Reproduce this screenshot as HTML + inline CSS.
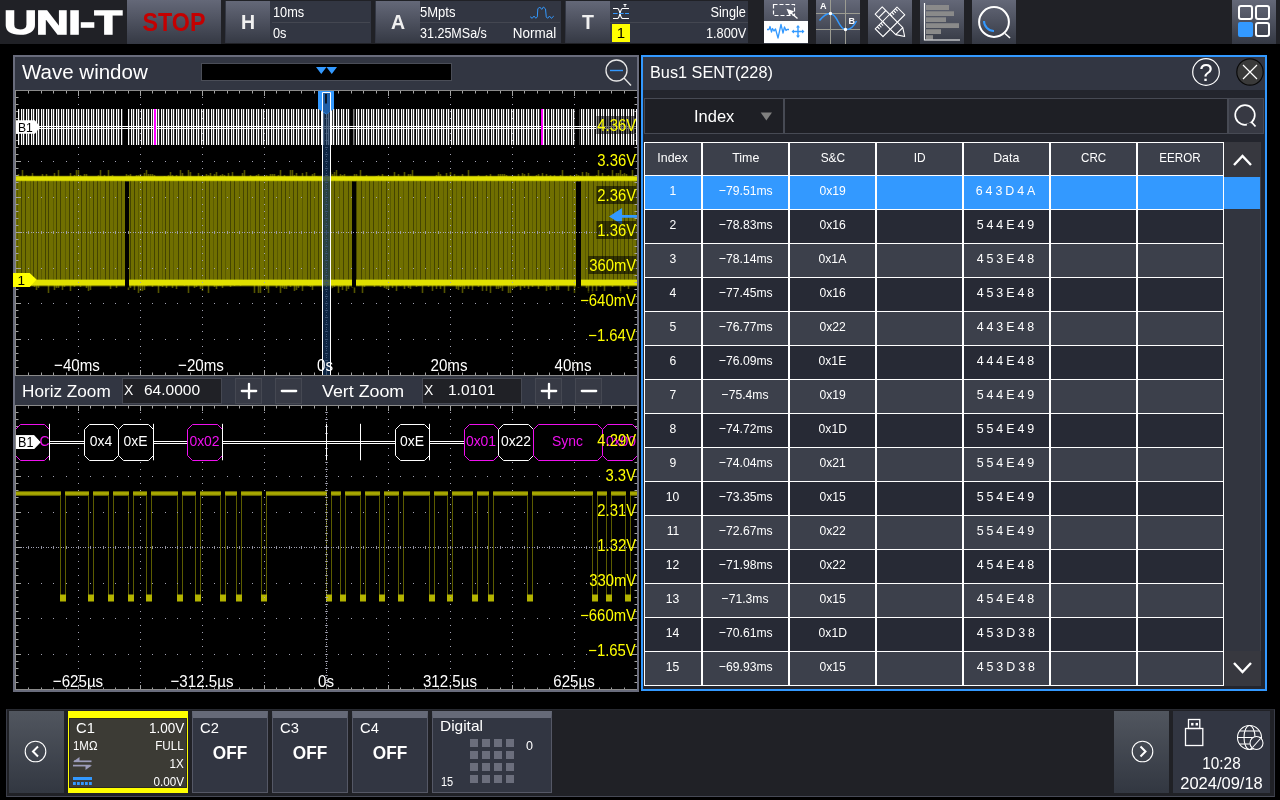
<!DOCTYPE html>
<html><head><meta charset="utf-8"><title>UNI-T</title><style>
*{box-sizing:border-box;margin:0;padding:0}
html,body{width:1280px;height:800px;background:#000;overflow:hidden}
body{position:relative;font-family:"Liberation Sans",sans-serif;color:#fff;font-size:14px;line-height:1}
.a{position:absolute}
.t{position:absolute;white-space:nowrap;line-height:1;transform-origin:0 50%}
.tr{position:absolute;white-space:nowrap;line-height:1;text-align:right;transform-origin:100% 50%}
.tc{position:absolute;white-space:nowrap;line-height:1;text-align:center;transform-origin:50% 50%}
.gb{background:linear-gradient(#646878,#353944)}
#top{left:0;top:0;width:1280px;height:44px;background:#202126}
.blk{background:#323642;top:1px;height:42px}
.hl{background:#444751;height:1px}
svg{position:absolute;overflow:visible}
.cell{position:absolute;height:33px;line-height:30.5px;text-align:center;font-size:13.5px;white-space:nowrap}
</style></head><body><div id="root" class="a" style="left:0;top:0;width:1280px;height:800px;will-change:transform">
<div id="top" class="a">
<div class="t" style="left:3.8px;top:6px;font-size:33px;font-weight:bold;letter-spacing:-.5px;transform:scaleX(1.375);color:#fff;-webkit-text-stroke:1.4px #fff">UNI-T</div>
<div class="a gb" style="left:127px;top:0;width:94px;height:44px"></div>
<div class="tc" style="left:127px;width:94px;top:9.7px;font-size:25px;font-weight:bold;color:#c40000;transform:scaleX(.93)">STOP</div>
<div class="a blk" style="left:225px;width:146px"></div>
<div class="a gb" style="left:226px;top:1px;width:44px;height:42px"></div>
<div class="tc" style="left:226px;width:44px;top:11.3px;font-size:21px;font-weight:bold;color:#f0f0f0;transform:scaleX(.93)">H</div>
<div class="a hl" style="left:272px;top:22px;width:98px"></div>
<div class="t" style="left:273px;top:5px;font-size:14px;transform:scaleX(.91)">10ms</div>
<div class="t" style="left:273px;top:26px;font-size:14px;transform:scaleX(.91)">0s</div>
<div class="a blk" style="left:375px;width:186px"></div>
<div class="a gb" style="left:376px;top:1px;width:44px;height:42px"></div>
<div class="tc" style="left:376px;width:44px;top:11.3px;font-size:21px;font-weight:bold;color:#f0f0f0;transform:scaleX(.93)">A</div>
<div class="a hl" style="left:420px;top:22px;width:140px"></div>
<div class="t" style="left:420px;top:5px;font-size:14px;transform:scaleX(.93)">5Mpts</div>
<div class="t" style="left:420px;top:26px;font-size:14px;transform:scaleX(.895)">31.25MSa/s</div>
<div class="tr" style="right:724px;top:26px;font-size:14px;transform:scaleX(.96)">Normal</div>
<svg style="left:528px;top:4px" width="28" height="18"><path d="M2.1 12.7 L4.2 14.3 L6 12.1 L7.9 14.3 L9.3 12.9 L9.8 4.9 L11.7 3 L13.750 5.4 L15.4 3 L17.5 4.9 L18.250 12.9 L19.6 14.3 L21.5 12.1 L23.4 14.3 L25.750 12.1" fill="none" stroke="#3399ff" stroke-width="1"/></svg>
<div class="a blk" style="left:565px;width:183px"></div>
<div class="a gb" style="left:566px;top:1px;width:44px;height:42px"></div>
<div class="tc" style="left:566px;width:44px;top:11.3px;font-size:21px;font-weight:bold;color:#f0f0f0;transform:scaleX(.93)">T</div>
<div class="a hl" style="left:610px;top:22px;width:138px"></div>
<div class="a" style="left:612px;top:24px;width:18px;height:18px;background:#ffff00"></div>
<div class="tc" style="left:612px;width:18px;top:24.5px;font-size:15px;color:#000">1</div>
<svg style="left:611px;top:3px" width="20" height="18"><g fill="none" stroke="#fff" stroke-width="1.1"><path d="M2 5.5 H6.5 C9 5.5 9 15.5 11.5 15.5 H18"/><path d="M2 15.5 H6.5 C9 15.5 9 5.5 11.5 5.5 H18"/><path d="M12.5 1.5 H15.5 M14 1.5 V4"/></g><path d="M2 10.5 H18" stroke="#3399ff" stroke-width="1" stroke-dasharray="4.600 1.4"/></svg>
<div class="tr" style="right:534px;top:5px;font-size:14px;transform:scaleX(.91)">Single</div>
<div class="tr" style="right:534px;top:26px;font-size:14px;transform:scaleX(.91)">1.800V</div>
<div class="a gb" style="left:764px;top:0;width:44px;height:44px"></div>
<div class="a gb" style="left:816px;top:0;width:44px;height:44px"></div>
<div class="a gb" style="left:868px;top:0;width:44px;height:44px"></div>
<div class="a gb" style="left:920px;top:0;width:44px;height:44px"></div>
<div class="a gb" style="left:972px;top:0;width:44px;height:44px"></div>
<div class="a" style="left:764px;top:21px;width:44px;height:22px;background:#fff"></div>
<svg style="left:764px;top:0" width="44" height="44"><rect x="9.5" y="4.5" width="21" height="11" fill="none" stroke="#fff" stroke-width="1.2" stroke-dasharray="4 2"/><path d="M22.5 8.8 L30 11.2 L25.3 15.600 Z" fill="#fff"/><path d="M26.500 12.500 L33.5 18.5" stroke="#fff" stroke-width="1.3"/><path d="M3 29.5 H5 L6 26.5 L7.5 32 L8.5 28.5 L10 31 L11.5 29 L14 38 L17 24.5 L19 33 L20.5 27 L22 30.5 L23 29.5 H25" fill="none" stroke="#3399ff" stroke-width="1.3" stroke-linejoin="round"/><g stroke="#3399ff" stroke-width="1.4" fill="#3399ff"><path d="M28.5 31.5 H39.5 M34 26 V37" /><path d="M27.5 31.5 L30 29.5 V33.5 Z M40.5 31.5 L38 29.5 V33.5 Z M34 25 L32 27.5 H36 Z M34 38 L32 35.5 H36 Z" stroke="none"/></g></svg>
<svg style="left:816px;top:0" width="44" height="44"><g stroke="#9c9c92" stroke-width="1"><path d="M14.5 0 V44 M29.5 0 V44 M0 13.5 H44 M0 29.5 H44"/></g><path d="M3.5 20.5 C8 15 11 13 14.5 13.5 C22 14.5 22 28.5 29.5 29.5 C34 30 37.5 27 40.5 21" fill="none" stroke="#3399ff" stroke-width="1.6"/><circle cx="14.5" cy="13.5" r="1.7" fill="#fff"/><circle cx="29.5" cy="29.5" r="1.7" fill="#fff"/><text x="4" y="9" font-family='"Liberation Sans",sans-serif' font-size="9" font-weight="bold" fill="#fff">A</text><text x="32.5" y="24" font-family='"Liberation Sans",sans-serif' font-size="9" font-weight="bold" fill="#fff">B</text></svg>
<svg style="left:868px;top:0" width="44" height="44"><g fill="none" stroke="#fff" stroke-width="1.1" stroke-linejoin="round"><g transform="translate(22 21.8) rotate(-45)"><rect x="-15.4" y="-5.5" width="30.8" height="11"/><path d="M-12.5 -5.5 v3.3 M-10 -5.5 v3.3 M-7.5 -5.5 v3.3 M-5 -5.5 v3.3 M5.5 -5.5 v3.3 M8 -5.5 v3.3 M10.500 -5.5 v3.3 M13 -5.5 v3.3"/></g><g transform="translate(22 21.8) rotate(45)"><path d="M-16 -5 H13.1 L20.700 0 L13.1 5 H-16 Z M13.1 -5 V5 M-11 -5 V5"/></g></g></svg>
<svg style="left:920px;top:0" width="44" height="44"><g fill="#8a8a8a"><rect x="6" y="5" width="23" height="5"/><rect x="6" y="11.3" width="28" height="4.7"/><rect x="6" y="17.3" width="20" height="4.7"/><rect x="6" y="23.2" width="33" height="4.8"/><rect x="6" y="29.2" width="15" height="4.8"/><rect x="6" y="35.2" width="7" height="4.3"/></g><path d="M4.5 3 V40 H40" fill="none" stroke="#fff" stroke-width="1.2"/></svg>
<svg style="left:972px;top:0" width="44" height="44"><circle cx="22" cy="22" r="14.9" fill="none" stroke="#fff" stroke-width="2"/><path d="M33 33.5 L38 38" stroke="#fff" stroke-width="1.6"/><path d="M12 21 A10 10 0 0 0 22 31" fill="none" stroke="#3399ff" stroke-width="2"/></svg>
<div class="a gb" style="left:1232px;top:0;width:44px;height:44px"></div>
<svg style="left:1232px;top:0" width="44" height="44"><g fill="none" stroke="#fff" stroke-width="2"><rect x="7" y="6" width="13" height="13" rx="2"/><rect x="24" y="6" width="13" height="13" rx="2"/><rect x="24" y="23" width="13" height="13" rx="2"/></g><rect x="6" y="22" width="15" height="15" rx="2" fill="#3399ff"/></svg>
</div>
<div class="a" style="left:13px;top:55px;width:626px;height:637px;background:#696c7c"></div>
<div class="a" style="left:15px;top:57px;width:622px;height:633px;background:#8a8a8a"></div>
<div class="a" style="left:15px;top:57px;width:622px;height:33px;background:#323642"></div>
<div class="t" style="left:22px;top:61.5px;font-size:20.5px;transform:scaleX(1.0)">Wave window</div>
<div class="a" style="left:201px;top:63px;width:251px;height:18px;background:#000;border:1px solid #4a4d57"></div>
<svg style="left:316px;top:67px" width="22" height="8"><path d="M0 0 H10.5 L5.25 7 Z M10.5 0 H21 L15.75 7 Z" fill="#3399ff"/></svg>
<svg style="left:603px;top:57px" width="32" height="32"><circle cx="13.5" cy="13.5" r="10.5" fill="none" stroke="#e6e6e6" stroke-width="1.3"/><path d="M21 21 L28 28.5" stroke="#e6e6e6" stroke-width="1.3"/><path d="M7 13.5 H20" stroke="#3399ff" stroke-width="1.4"/></svg>
<div class="a" style="left:16px;top:91px;width:621px;height:284px;background:#000;overflow:hidden">
<svg style="left:0;top:0" width="620" height="284">
<rect x="0" y="88" width="621" height="102" fill="#706f00"/>
<path d="M5.5 88v102M9.5 88v102M17.5 88v102M21.5 88v102M29.5 88v102M32.5 88v102M40.5 88v102M44.5 88v102M53.5 88v102M57.5 88v102M65.5 88v102M70.5 88v102M77.5 88v102M81.5 88v102M89.5 88v102M93.5 88v102M101.5 88v102M105.5 88v102M114.5 88v102M118.5 88v102M126.5 88v102M130.5 88v102M138.5 88v102M142.5 88v102M149.5 88v102M153.5 88v102M162.5 88v102M167.5 88v102M176.5 88v102M180.5 88v102M189.5 88v102M193.5 88v102M201.5 88v102M205.5 88v102M214.5 88v102M218.5 88v102M227.5 88v102M231.5 88v102M239.5 88v102M243.5 88v102M252.5 88v102M257.5 88v102M265.5 88v102M269.5 88v102M277.5 88v102M281.5 88v102M291.5 88v102M294.5 88v102M302.5 88v102M307.5 88v102M314.5 88v102M318.5 88v102M327.5 88v102M332.5 88v102M340.5 88v102M345.5 88v102M353.5 88v102M357.5 88v102M365.5 88v102M370.5 88v102M378.5 88v102M382.5 88v102M392.5 88v102M397.5 88v102M404.5 88v102M409.5 88v102M418.5 88v102M422.5 88v102M431.5 88v102M436.5 88v102M445.5 88v102M449.5 88v102M457.5 88v102M461.5 88v102M470.5 88v102M474.5 88v102M482.5 88v102M487.5 88v102M495.5 88v102M499.5 88v102M508.5 88v102M512.5 88v102M520.5 88v102M524.5 88v102M533.5 88v102M538.5 88v102M548.5 88v102M551.5 88v102M561.5 88v102M564.5 88v102M572.5 88v102M577.5 88v102M586.5 88v102M589.5 88v102M597.5 88v102M601.5 88v102M608.5 88v102M612.5 88v102M620.5 88v102" stroke="#444400" stroke-width="1" fill="none"/>
<path d="M1.5 88v102M14.5 88v102M25.5 88v102M37.5 88v102M49.5 88v102M61.5 88v102M73.5 88v102M84.5 88v102M97.5 88v102M109.5 88v102M122.5 88v102M134.5 88v102M146.5 88v102M157.5 88v102M171.5 88v102M185.5 88v102M197.5 88v102M209.5 88v102M223.5 88v102M234.5 88v102M248.5 88v102M261.5 88v102M273.5 88v102M286.5 88v102M298.5 88v102M311.5 88v102M323.5 88v102M336.5 88v102M349.5 88v102M362.5 88v102M374.5 88v102M387.5 88v102M400.5 88v102M414.5 88v102M427.5 88v102M440.5 88v102M454.5 88v102M466.5 88v102M478.5 88v102M491.5 88v102M503.5 88v102M516.5 88v102M529.5 88v102M543.5 88v102M556.5 88v102M569.5 88v102M581.5 88v102M593.5 88v102M604.5 88v102M616.5 88v102" stroke="#5a5a00" stroke-width="1" fill="none"/>
<path d="M2.5 86v-3M6.5 86v-7M10.5 86v-2M16.5 86v-4M16.5 194v1M18.5 194v2M20.5 194v5M22.5 194v3M26.5 86v-3M30.5 86v-3M32.5 194v8M34.5 86v-1M38.5 86v-4M38.5 194v5M40.5 194v3M42.5 86v-7M42.5 194v3M46.5 194v5M48.5 194v2M54.5 86v-4M54.5 194v6M58.5 86v-2M58.5 194v2M60.5 86v-7M62.5 86v-7M64.5 86v-2M64.5 194v2M68.5 86v-3M70.5 86v-3M70.5 194v3M72.5 194v6M74.5 194v5M82.5 86v-2M84.5 86v-7M88.5 86v-2M92.5 86v-7M94.5 86v-1M94.5 194v4M96.5 86v-2M100.5 194v3M110.5 86v-3M112.5 86v-2M112.5 194v5M114.5 86v-3M114.5 194v3M118.5 194v5M120.5 86v-2M122.5 86v-2M122.5 194v8M124.5 86v-3M124.5 194v6M126.5 194v6M128.5 86v-4M128.5 194v5M130.5 86v-7M130.5 194v1M132.5 86v-3M134.5 86v-3M136.5 86v-3M136.5 194v2M138.5 86v-2M142.5 194v8M144.5 194v1M146.5 194v2M148.5 86v-1M150.5 194v3M152.5 86v-2M154.5 86v-5M156.5 86v-2M156.5 194v3M160.5 86v-2M160.5 194v4M164.5 86v-7M166.5 86v-4M168.5 194v1M172.5 86v-7M172.5 194v8M174.5 86v-5M178.5 194v3M180.5 194v2M182.5 86v-4M184.5 194v4M186.5 86v-1M186.5 194v6M190.5 86v-3M192.5 86v-2M192.5 194v8M194.5 86v-4M198.5 86v-3M198.5 194v2M200.5 86v-5M200.5 194v4M202.5 194v1M204.5 86v-2M204.5 194v1M206.5 86v-3M206.5 194v3M208.5 86v-2M212.5 86v-4M214.5 194v2M216.5 86v-5M218.5 194v1M224.5 194v1M226.5 86v-4M228.5 86v-7M234.5 86v-2M238.5 194v8M240.5 86v-2M242.5 86v-3M242.5 194v8M244.5 194v8M246.5 194v1M250.5 86v-2M250.5 194v4M252.5 194v8M254.5 86v-3M256.5 86v-3M258.5 86v-3M260.5 194v3M262.5 86v-2M264.5 86v-7M264.5 194v8M266.5 194v3M268.5 86v-2M268.5 194v4M270.5 194v4M274.5 86v-7M274.5 194v2M276.5 86v-7M278.5 86v-2M278.5 194v6M280.5 86v-4M280.5 194v5M282.5 194v3M286.5 86v-4M286.5 194v6M290.5 86v-5M292.5 194v1M294.5 194v2M296.5 86v-3M296.5 194v5M298.5 86v-4M300.5 86v-1M306.5 194v6M310.5 194v1M314.5 86v-5M314.5 194v4M316.5 86v-3M316.5 194v3M318.5 86v-5M318.5 194v2M320.5 86v-7M322.5 194v8M324.5 86v-3M324.5 194v2M326.5 86v-2M326.5 194v5M328.5 86v-3M330.5 194v6M332.5 194v4M334.5 86v-1M336.5 194v3M338.5 86v-3M338.5 194v8M340.5 86v-3M342.5 194v1M344.5 86v-7M346.5 194v8M348.5 194v2M350.5 86v-2M358.5 194v2M360.5 86v-1M362.5 86v-2M364.5 194v2M366.5 86v-3M368.5 194v3M370.5 194v4M372.5 194v5M376.5 194v3M378.5 86v-5M380.5 86v-1M380.5 194v6M382.5 86v-3M384.5 194v1M388.5 86v-5M388.5 194v4M392.5 86v-3M392.5 194v3M394.5 86v-3M394.5 194v4M396.5 86v-7M400.5 194v2M402.5 194v1M404.5 194v1M406.5 194v8M412.5 194v2M416.5 194v6M420.5 86v-2M420.5 194v4M422.5 86v-5M424.5 86v-3M424.5 194v4M426.5 194v1M428.5 194v8M430.5 86v-4M434.5 86v-5M434.5 194v1M438.5 86v-3M440.5 194v4M442.5 86v-1M442.5 194v5M444.5 194v2M446.5 86v-3M446.5 194v8M448.5 194v4M452.5 86v-7M452.5 194v4M456.5 194v5M462.5 86v-2M462.5 194v2M466.5 194v6M470.5 86v-2M470.5 194v6M474.5 86v-3M474.5 194v8M480.5 194v4M482.5 86v-3M482.5 194v4M484.5 86v-3M484.5 194v3M486.5 86v-3M486.5 194v6M488.5 86v-3M490.5 86v-2M492.5 194v8M494.5 194v8M496.5 194v4M498.5 86v-1M498.5 194v3M500.5 194v2M502.5 86v-3M504.5 194v5M506.5 86v-4M506.5 194v1M508.5 86v-3M508.5 194v3M512.5 86v-4M512.5 194v4M514.5 86v-1M516.5 194v2M520.5 86v-2M522.5 86v-3M522.5 194v4M524.5 194v1M526.5 86v-4M526.5 194v1M530.5 86v-3M530.5 194v6M532.5 86v-1M532.5 194v2M534.5 86v-2M534.5 194v5M536.5 194v1M538.5 86v-2M540.5 194v5M542.5 194v5M544.5 86v-2M546.5 86v-7M550.5 86v-1M552.5 194v6M554.5 86v-2M558.5 194v8M560.5 86v-3M560.5 194v2M562.5 86v-2M562.5 194v3M564.5 86v-1M566.5 86v-5M570.5 86v-5M570.5 194v3M572.5 86v-4M572.5 194v8M574.5 86v-1M576.5 194v8M580.5 86v-2M580.5 194v6M582.5 86v-7M584.5 194v2M586.5 86v-4M588.5 194v6M592.5 86v-2M596.5 86v-7M596.5 194v2M600.5 86v-4M602.5 86v-4M604.5 86v-7M604.5 194v8M606.5 86v-3M608.5 86v-4M608.5 194v2M610.5 86v-3M612.5 194v4M614.5 86v-1M616.5 86v-7" stroke="#8c8c00" stroke-width="1.6" fill="none" opacity=".6"/>
<rect x="0" y="85.3" width="621" height="4.4" fill="#f4f400"/>
<rect x="0" y="84.6" width="621" height="5.8" fill="#c8c800" opacity=".4"/>
<rect x="0" y="189" width="621" height="5.5" fill="#f4f400"/>
<rect x="0" y="188" width="621" height="7.5" fill="#c8c800" opacity=".45"/>
<rect x="109" y="90.5" width="4" height="106" fill="#000"/>
<rect x="336" y="90.5" width="4" height="106" fill="#000"/>
<rect x="560" y="90.5" width="5" height="106" fill="#000"/>
<path d="M62 6.5h1M62 13.5h1M62 20.5h1M62 27.5h1M62 35.5h1M62 42.5h1M62 49.5h1M62 56.5h1M62 63.5h1M62 70.5h1M62 77.5h1M62 84.5h1M62 91.5h1M62 98.5h1M62 106.5h1M62 113.5h1M62 120.5h1M62 127.5h1M62 134.5h1M62 141.5h1M62 148.5h1M62 155.5h1M62 162.5h1M62 169.5h1M62 177.5h1M62 184.5h1M62 191.5h1M62 198.5h1M62 205.5h1M62 212.5h1M62 219.5h1M62 226.5h1M62 233.5h1M62 240.5h1M62 248.5h1M62 255.5h1M62 262.5h1M62 269.5h1M62 276.5h1M124 6.5h1M124 13.5h1M124 20.5h1M124 27.5h1M124 35.5h1M124 42.5h1M124 49.5h1M124 56.5h1M124 63.5h1M124 70.5h1M124 77.5h1M124 84.5h1M124 91.5h1M124 98.5h1M124 106.5h1M124 113.5h1M124 120.5h1M124 127.5h1M124 134.5h1M124 141.5h1M124 148.5h1M124 155.5h1M124 162.5h1M124 169.5h1M124 177.5h1M124 184.5h1M124 191.5h1M124 198.5h1M124 205.5h1M124 212.5h1M124 219.5h1M124 226.5h1M124 233.5h1M124 240.5h1M124 248.5h1M124 255.5h1M124 262.5h1M124 269.5h1M124 276.5h1M186 6.5h1M186 13.5h1M186 20.5h1M186 27.5h1M186 35.5h1M186 42.5h1M186 49.5h1M186 56.5h1M186 63.5h1M186 70.5h1M186 77.5h1M186 84.5h1M186 91.5h1M186 98.5h1M186 106.5h1M186 113.5h1M186 120.5h1M186 127.5h1M186 134.5h1M186 141.5h1M186 148.5h1M186 155.5h1M186 162.5h1M186 169.5h1M186 177.5h1M186 184.5h1M186 191.5h1M186 198.5h1M186 205.5h1M186 212.5h1M186 219.5h1M186 226.5h1M186 233.5h1M186 240.5h1M186 248.5h1M186 255.5h1M186 262.5h1M186 269.5h1M186 276.5h1M248 6.5h1M248 13.5h1M248 20.5h1M248 27.5h1M248 35.5h1M248 42.5h1M248 49.5h1M248 56.5h1M248 63.5h1M248 70.5h1M248 77.5h1M248 84.5h1M248 91.5h1M248 98.5h1M248 106.5h1M248 113.5h1M248 120.5h1M248 127.5h1M248 134.5h1M248 141.5h1M248 148.5h1M248 155.5h1M248 162.5h1M248 169.5h1M248 177.5h1M248 184.5h1M248 191.5h1M248 198.5h1M248 205.5h1M248 212.5h1M248 219.5h1M248 226.5h1M248 233.5h1M248 240.5h1M248 248.5h1M248 255.5h1M248 262.5h1M248 269.5h1M248 276.5h1M372 6.5h1M372 13.5h1M372 20.5h1M372 27.5h1M372 35.5h1M372 42.5h1M372 49.5h1M372 56.5h1M372 63.5h1M372 70.5h1M372 77.5h1M372 84.5h1M372 91.5h1M372 98.5h1M372 106.5h1M372 113.5h1M372 120.5h1M372 127.5h1M372 134.5h1M372 141.5h1M372 148.5h1M372 155.5h1M372 162.5h1M372 169.5h1M372 177.5h1M372 184.5h1M372 191.5h1M372 198.5h1M372 205.5h1M372 212.5h1M372 219.5h1M372 226.5h1M372 233.5h1M372 240.5h1M372 248.5h1M372 255.5h1M372 262.5h1M372 269.5h1M372 276.5h1M434 6.5h1M434 13.5h1M434 20.5h1M434 27.5h1M434 35.5h1M434 42.5h1M434 49.5h1M434 56.5h1M434 63.5h1M434 70.5h1M434 77.5h1M434 84.5h1M434 91.5h1M434 98.5h1M434 106.5h1M434 113.5h1M434 120.5h1M434 127.5h1M434 134.5h1M434 141.5h1M434 148.5h1M434 155.5h1M434 162.5h1M434 169.5h1M434 177.5h1M434 184.5h1M434 191.5h1M434 198.5h1M434 205.5h1M434 212.5h1M434 219.5h1M434 226.5h1M434 233.5h1M434 240.5h1M434 248.5h1M434 255.5h1M434 262.5h1M434 269.5h1M434 276.5h1M496 6.5h1M496 13.5h1M496 20.5h1M496 27.5h1M496 35.5h1M496 42.5h1M496 49.5h1M496 56.5h1M496 63.5h1M496 70.5h1M496 77.5h1M496 84.5h1M496 91.5h1M496 98.5h1M496 106.5h1M496 113.5h1M496 120.5h1M496 127.5h1M496 134.5h1M496 141.5h1M496 148.5h1M496 155.5h1M496 162.5h1M496 169.5h1M496 177.5h1M496 184.5h1M496 191.5h1M496 198.5h1M496 205.5h1M496 212.5h1M496 219.5h1M496 226.5h1M496 233.5h1M496 240.5h1M496 248.5h1M496 255.5h1M496 262.5h1M496 269.5h1M496 276.5h1M558 6.5h1M558 13.5h1M558 20.5h1M558 27.5h1M558 35.5h1M558 42.5h1M558 49.5h1M558 56.5h1M558 63.5h1M558 70.5h1M558 77.5h1M558 84.5h1M558 91.5h1M558 98.5h1M558 106.5h1M558 113.5h1M558 120.5h1M558 127.5h1M558 134.5h1M558 141.5h1M558 148.5h1M558 155.5h1M558 162.5h1M558 169.5h1M558 177.5h1M558 184.5h1M558 191.5h1M558 198.5h1M558 205.5h1M558 212.5h1M558 219.5h1M558 226.5h1M558 233.5h1M558 240.5h1M558 248.5h1M558 255.5h1M558 262.5h1M558 269.5h1M558 276.5h1M12 35.5h1M25 35.5h1M37 35.5h1M50 35.5h1M62 35.5h1M74 35.5h1M87 35.5h1M99 35.5h1M112 35.5h1M124 35.5h1M136 35.5h1M149 35.5h1M161 35.5h1M174 35.5h1M186 35.5h1M198 35.5h1M211 35.5h1M223 35.5h1M236 35.5h1M248 35.5h1M260 35.5h1M273 35.5h1M285 35.5h1M298 35.5h1M310 35.5h1M322 35.5h1M335 35.5h1M347 35.5h1M360 35.5h1M372 35.5h1M384 35.5h1M397 35.5h1M409 35.5h1M422 35.5h1M434 35.5h1M446 35.5h1M459 35.5h1M471 35.5h1M484 35.5h1M496 35.5h1M508 35.5h1M521 35.5h1M533 35.5h1M546 35.5h1M558 35.5h1M570 35.5h1M583 35.5h1M595 35.5h1M608 35.5h1M12 70.5h1M25 70.5h1M37 70.5h1M50 70.5h1M62 70.5h1M74 70.5h1M87 70.5h1M99 70.5h1M112 70.5h1M124 70.5h1M136 70.5h1M149 70.5h1M161 70.5h1M174 70.5h1M186 70.5h1M198 70.5h1M211 70.5h1M223 70.5h1M236 70.5h1M248 70.5h1M260 70.5h1M273 70.5h1M285 70.5h1M298 70.5h1M310 70.5h1M322 70.5h1M335 70.5h1M347 70.5h1M360 70.5h1M372 70.5h1M384 70.5h1M397 70.5h1M409 70.5h1M422 70.5h1M434 70.5h1M446 70.5h1M459 70.5h1M471 70.5h1M484 70.5h1M496 70.5h1M508 70.5h1M521 70.5h1M533 70.5h1M546 70.5h1M558 70.5h1M570 70.5h1M583 70.5h1M595 70.5h1M608 70.5h1M12 106.5h1M25 106.5h1M37 106.5h1M50 106.5h1M62 106.5h1M74 106.5h1M87 106.5h1M99 106.5h1M112 106.5h1M124 106.5h1M136 106.5h1M149 106.5h1M161 106.5h1M174 106.5h1M186 106.5h1M198 106.5h1M211 106.5h1M223 106.5h1M236 106.5h1M248 106.5h1M260 106.5h1M273 106.5h1M285 106.5h1M298 106.5h1M310 106.5h1M322 106.5h1M335 106.5h1M347 106.5h1M360 106.5h1M372 106.5h1M384 106.5h1M397 106.5h1M409 106.5h1M422 106.5h1M434 106.5h1M446 106.5h1M459 106.5h1M471 106.5h1M484 106.5h1M496 106.5h1M508 106.5h1M521 106.5h1M533 106.5h1M546 106.5h1M558 106.5h1M570 106.5h1M583 106.5h1M595 106.5h1M608 106.5h1M12 177.5h1M25 177.5h1M37 177.5h1M50 177.5h1M62 177.5h1M74 177.5h1M87 177.5h1M99 177.5h1M112 177.5h1M124 177.5h1M136 177.5h1M149 177.5h1M161 177.5h1M174 177.5h1M186 177.5h1M198 177.5h1M211 177.5h1M223 177.5h1M236 177.5h1M248 177.5h1M260 177.5h1M273 177.5h1M285 177.5h1M298 177.5h1M310 177.5h1M322 177.5h1M335 177.5h1M347 177.5h1M360 177.5h1M372 177.5h1M384 177.5h1M397 177.5h1M409 177.5h1M422 177.5h1M434 177.5h1M446 177.5h1M459 177.5h1M471 177.5h1M484 177.5h1M496 177.5h1M508 177.5h1M521 177.5h1M533 177.5h1M546 177.5h1M558 177.5h1M570 177.5h1M583 177.5h1M595 177.5h1M608 177.5h1M12 212.5h1M25 212.5h1M37 212.5h1M50 212.5h1M62 212.5h1M74 212.5h1M87 212.5h1M99 212.5h1M112 212.5h1M124 212.5h1M136 212.5h1M149 212.5h1M161 212.5h1M174 212.5h1M186 212.5h1M198 212.5h1M211 212.5h1M223 212.5h1M236 212.5h1M248 212.5h1M260 212.5h1M273 212.5h1M285 212.5h1M298 212.5h1M310 212.5h1M322 212.5h1M335 212.5h1M347 212.5h1M360 212.5h1M372 212.5h1M384 212.5h1M397 212.5h1M409 212.5h1M422 212.5h1M434 212.5h1M446 212.5h1M459 212.5h1M471 212.5h1M484 212.5h1M496 212.5h1M508 212.5h1M521 212.5h1M533 212.5h1M546 212.5h1M558 212.5h1M570 212.5h1M583 212.5h1M595 212.5h1M608 212.5h1M12 248.5h1M25 248.5h1M37 248.5h1M50 248.5h1M62 248.5h1M74 248.5h1M87 248.5h1M99 248.5h1M112 248.5h1M124 248.5h1M136 248.5h1M149 248.5h1M161 248.5h1M174 248.5h1M186 248.5h1M198 248.5h1M211 248.5h1M223 248.5h1M236 248.5h1M248 248.5h1M260 248.5h1M273 248.5h1M285 248.5h1M298 248.5h1M310 248.5h1M322 248.5h1M335 248.5h1M347 248.5h1M360 248.5h1M372 248.5h1M384 248.5h1M397 248.5h1M409 248.5h1M422 248.5h1M434 248.5h1M446 248.5h1M459 248.5h1M471 248.5h1M484 248.5h1M496 248.5h1M508 248.5h1M521 248.5h1M533 248.5h1M546 248.5h1M558 248.5h1M570 248.5h1M583 248.5h1M595 248.5h1M608 248.5h1" stroke="#a2a2b2" stroke-width="1" fill="none"/><path d="M310 1.5h1M310 4.5h1M310 6.5h1M310 8.5h1M310 11.5h1M310 13.5h1M310 16.5h1M310 18.5h1M310 20.5h1M310 23.5h1M310 25.5h1M310 27.5h1M310 30.5h1M310 32.5h1M310 35.5h1M310 37.5h1M310 39.5h1M310 42.5h1M310 44.5h1M310 46.5h1M310 49.5h1M310 51.5h1M310 53.5h1M310 56.5h1M310 58.5h1M310 61.5h1M310 63.5h1M310 65.5h1M310 68.5h1M310 70.5h1M310 72.5h1M310 75.5h1M310 77.5h1M310 79.5h1M310 82.5h1M310 84.5h1M310 87.5h1M310 89.5h1M310 91.5h1M310 94.5h1M310 96.5h1M310 98.5h1M310 101.5h1M310 103.5h1M310 106.5h1M310 108.5h1M310 110.5h1M310 113.5h1M310 115.5h1M310 117.5h1M310 120.5h1M310 122.5h1M310 124.5h1M310 127.5h1M310 129.5h1M310 132.5h1M310 134.5h1M310 136.5h1M310 139.5h1M310 141.5h1M310 143.5h1M310 146.5h1M310 148.5h1M310 150.5h1M310 153.5h1M310 155.5h1M310 158.5h1M310 160.5h1M310 162.5h1M310 165.5h1M310 167.5h1M310 169.5h1M310 172.5h1M310 174.5h1M310 177.5h1M310 179.5h1M310 181.5h1M310 184.5h1M310 186.5h1M310 188.5h1M310 191.5h1M310 193.5h1M310 195.5h1M310 198.5h1M310 200.5h1M310 203.5h1M310 205.5h1M310 207.5h1M310 210.5h1M310 212.5h1M310 214.5h1M310 217.5h1M310 219.5h1M310 221.5h1M310 224.5h1M310 226.5h1M310 229.5h1M310 231.5h1M310 233.5h1M310 236.5h1M310 238.5h1M310 240.5h1M310 243.5h1M310 245.5h1M310 248.5h1M310 250.5h1M310 252.5h1M310 255.5h1M310 257.5h1M310 259.5h1M310 262.5h1M310 264.5h1M310 266.5h1M310 269.5h1M310 271.5h1M310 274.5h1M310 276.5h1M310 278.5h1M310 281.5h1M2 141.5h1M5 141.5h1M7 141.5h1M10 141.5h1M12 141.5h1M15 141.5h1M17 141.5h1M20 141.5h1M22 141.5h1M25 141.5h1M27 141.5h1M30 141.5h1M32 141.5h1M35 141.5h1M37 141.5h1M40 141.5h1M42 141.5h1M45 141.5h1M47 141.5h1M50 141.5h1M52 141.5h1M55 141.5h1M57 141.5h1M60 141.5h1M62 141.5h1M64 141.5h1M67 141.5h1M69 141.5h1M72 141.5h1M74 141.5h1M77 141.5h1M79 141.5h1M82 141.5h1M84 141.5h1M87 141.5h1M89 141.5h1M92 141.5h1M94 141.5h1M97 141.5h1M99 141.5h1M102 141.5h1M104 141.5h1M107 141.5h1M109 141.5h1M112 141.5h1M114 141.5h1M117 141.5h1M119 141.5h1M122 141.5h1M124 141.5h1M126 141.5h1M129 141.5h1M131 141.5h1M134 141.5h1M136 141.5h1M139 141.5h1M141 141.5h1M144 141.5h1M146 141.5h1M149 141.5h1M151 141.5h1M154 141.5h1M156 141.5h1M159 141.5h1M161 141.5h1M164 141.5h1M166 141.5h1M169 141.5h1M171 141.5h1M174 141.5h1M176 141.5h1M179 141.5h1M181 141.5h1M184 141.5h1M186 141.5h1M188 141.5h1M191 141.5h1M193 141.5h1M196 141.5h1M198 141.5h1M201 141.5h1M203 141.5h1M206 141.5h1M208 141.5h1M211 141.5h1M213 141.5h1M216 141.5h1M218 141.5h1M221 141.5h1M223 141.5h1M226 141.5h1M228 141.5h1M231 141.5h1M233 141.5h1M236 141.5h1M238 141.5h1M241 141.5h1M243 141.5h1M246 141.5h1M248 141.5h1M250 141.5h1M253 141.5h1M255 141.5h1M258 141.5h1M260 141.5h1M263 141.5h1M265 141.5h1M268 141.5h1M270 141.5h1M273 141.5h1M275 141.5h1M278 141.5h1M280 141.5h1M283 141.5h1M285 141.5h1M288 141.5h1M290 141.5h1M293 141.5h1M295 141.5h1M298 141.5h1M300 141.5h1M303 141.5h1M305 141.5h1M308 141.5h1M310 141.5h1M312 141.5h1M315 141.5h1M317 141.5h1M320 141.5h1M322 141.5h1M325 141.5h1M327 141.5h1M330 141.5h1M332 141.5h1M335 141.5h1M337 141.5h1M340 141.5h1M342 141.5h1M345 141.5h1M347 141.5h1M350 141.5h1M352 141.5h1M355 141.5h1M357 141.5h1M360 141.5h1M362 141.5h1M365 141.5h1M367 141.5h1M370 141.5h1M372 141.5h1M374 141.5h1M377 141.5h1M379 141.5h1M382 141.5h1M384 141.5h1M387 141.5h1M389 141.5h1M392 141.5h1M394 141.5h1M397 141.5h1M399 141.5h1M402 141.5h1M404 141.5h1M407 141.5h1M409 141.5h1M412 141.5h1M414 141.5h1M417 141.5h1M419 141.5h1M422 141.5h1M424 141.5h1M427 141.5h1M429 141.5h1M432 141.5h1M434 141.5h1M436 141.5h1M439 141.5h1M441 141.5h1M444 141.5h1M446 141.5h1M449 141.5h1M451 141.5h1M454 141.5h1M456 141.5h1M459 141.5h1M461 141.5h1M464 141.5h1M466 141.5h1M469 141.5h1M471 141.5h1M474 141.5h1M476 141.5h1M479 141.5h1M481 141.5h1M484 141.5h1M486 141.5h1M489 141.5h1M491 141.5h1M494 141.5h1M496 141.5h1M498 141.5h1M501 141.5h1M503 141.5h1M506 141.5h1M508 141.5h1M511 141.5h1M513 141.5h1M516 141.5h1M518 141.5h1M521 141.5h1M523 141.5h1M526 141.5h1M528 141.5h1M531 141.5h1M533 141.5h1M536 141.5h1M538 141.5h1M541 141.5h1M543 141.5h1M546 141.5h1M548 141.5h1M551 141.5h1M553 141.5h1M556 141.5h1M558 141.5h1M560 141.5h1M563 141.5h1M565 141.5h1M568 141.5h1M570 141.5h1M573 141.5h1M575 141.5h1M578 141.5h1M580 141.5h1M583 141.5h1M585 141.5h1M588 141.5h1M590 141.5h1M593 141.5h1M595 141.5h1M598 141.5h1M600 141.5h1M603 141.5h1M605 141.5h1M608 141.5h1M610 141.5h1M613 141.5h1M615 141.5h1M618 141.5h1" stroke="#a2a2b2" stroke-width="1" fill="none"/><path d="M12.5 140.0v3M25.5 140.0v3M37.5 140.0v3M50.5 140.0v3M62.5 140.0v3M74.5 140.0v3M87.5 140.0v3M99.5 140.0v3M112.5 140.0v3M124.5 140.0v3M136.5 140.0v3M149.5 140.0v3M161.5 140.0v3M174.5 140.0v3M186.5 140.0v3M198.5 140.0v3M211.5 140.0v3M223.5 140.0v3M236.5 140.0v3M248.5 140.0v3M260.5 140.0v3M273.5 140.0v3M285.5 140.0v3M298.5 140.0v3M310.5 140.0v3M322.5 140.0v3M335.5 140.0v3M347.5 140.0v3M360.5 140.0v3M372.5 140.0v3M384.5 140.0v3M397.5 140.0v3M409.5 140.0v3M422.5 140.0v3M434.5 140.0v3M446.5 140.0v3M459.5 140.0v3M471.5 140.0v3M484.5 140.0v3M496.5 140.0v3M508.5 140.0v3M521.5 140.0v3M533.5 140.0v3M546.5 140.0v3M558.5 140.0v3M570.5 140.0v3M583.5 140.0v3M595.5 140.0v3M608.5 140.0v3M309 6.5h3M309 13.5h3M309 20.5h3M309 27.5h3M309 35.5h3M309 42.5h3M309 49.5h3M309 56.5h3M309 63.5h3M309 70.5h3M309 77.5h3M309 84.5h3M309 91.5h3M309 98.5h3M309 106.5h3M309 113.5h3M309 120.5h3M309 127.5h3M309 134.5h3M309 141.5h3M309 148.5h3M309 155.5h3M309 162.5h3M309 169.5h3M309 177.5h3M309 184.5h3M309 191.5h3M309 198.5h3M309 205.5h3M309 212.5h3M309 219.5h3M309 226.5h3M309 233.5h3M309 240.5h3M309 248.5h3M309 255.5h3M309 262.5h3M309 269.5h3M309 276.5h3" stroke="#a2a2b2" stroke-width="1" fill="none" opacity=".85"/><path d="M12.5 0v2.5M12.5 284v-2.5M25.5 0v2.5M25.5 284v-2.5M37.5 0v2.5M37.5 284v-2.5M50.5 0v2.5M50.5 284v-2.5M62.5 0v5M62.5 284v-5M74.5 0v2.5M74.5 284v-2.5M87.5 0v2.5M87.5 284v-2.5M99.5 0v2.5M99.5 284v-2.5M112.5 0v2.5M112.5 284v-2.5M124.5 0v5M124.5 284v-5M136.5 0v2.5M136.5 284v-2.5M149.5 0v2.5M149.5 284v-2.5M161.5 0v2.5M161.5 284v-2.5M174.5 0v2.5M174.5 284v-2.5M186.5 0v5M186.5 284v-5M198.5 0v2.5M198.5 284v-2.5M211.5 0v2.5M211.5 284v-2.5M223.5 0v2.5M223.5 284v-2.5M236.5 0v2.5M236.5 284v-2.5M248.5 0v5M248.5 284v-5M260.5 0v2.5M260.5 284v-2.5M273.5 0v2.5M273.5 284v-2.5M285.5 0v2.5M285.5 284v-2.5M298.5 0v2.5M298.5 284v-2.5M310.5 0v5M310.5 284v-5M322.5 0v2.5M322.5 284v-2.5M335.5 0v2.5M335.5 284v-2.5M347.5 0v2.5M347.5 284v-2.5M360.5 0v2.5M360.5 284v-2.5M372.5 0v5M372.5 284v-5M384.5 0v2.5M384.5 284v-2.5M397.5 0v2.5M397.5 284v-2.5M409.5 0v2.5M409.5 284v-2.5M422.5 0v2.5M422.5 284v-2.5M434.5 0v5M434.5 284v-5M446.5 0v2.5M446.5 284v-2.5M459.5 0v2.5M459.5 284v-2.5M471.5 0v2.5M471.5 284v-2.5M484.5 0v2.5M484.5 284v-2.5M496.5 0v5M496.5 284v-5M508.5 0v2.5M508.5 284v-2.5M521.5 0v2.5M521.5 284v-2.5M533.5 0v2.5M533.5 284v-2.5M546.5 0v2.5M546.5 284v-2.5M558.5 0v5M558.5 284v-5M570.5 0v2.5M570.5 284v-2.5M583.5 0v2.5M583.5 284v-2.5M595.5 0v2.5M595.5 284v-2.5M608.5 0v2.5M608.5 284v-2.5M0 6.5h2.5M621 6.5h-2.5M0 13.5h2.5M621 13.5h-2.5M0 20.5h2.5M621 20.5h-2.5M0 27.5h2.5M621 27.5h-2.5M0 35.5h5M621 35.5h-5M0 42.5h2.5M621 42.5h-2.5M0 49.5h2.5M621 49.5h-2.5M0 56.5h2.5M621 56.5h-2.5M0 63.5h2.5M621 63.5h-2.5M0 70.5h5M621 70.5h-5M0 77.5h2.5M621 77.5h-2.5M0 84.5h2.5M621 84.5h-2.5M0 91.5h2.5M621 91.5h-2.5M0 98.5h2.5M621 98.5h-2.5M0 106.5h5M621 106.5h-5M0 113.5h2.5M621 113.5h-2.5M0 120.5h2.5M621 120.5h-2.5M0 127.5h2.5M621 127.5h-2.5M0 134.5h2.5M621 134.5h-2.5M0 141.5h5M621 141.5h-5M0 148.5h2.5M621 148.5h-2.5M0 155.5h2.5M621 155.5h-2.5M0 162.5h2.5M621 162.5h-2.5M0 169.5h2.5M621 169.5h-2.5M0 177.5h5M621 177.5h-5M0 184.5h2.5M621 184.5h-2.5M0 191.5h2.5M621 191.5h-2.5M0 198.5h2.5M621 198.5h-2.5M0 205.5h2.5M621 205.5h-2.5M0 212.5h5M621 212.5h-5M0 219.5h2.5M621 219.5h-2.5M0 226.5h2.5M621 226.5h-2.5M0 233.5h2.5M621 233.5h-2.5M0 240.5h2.5M621 240.5h-2.5M0 248.5h5M621 248.5h-5M0 255.5h2.5M621 255.5h-2.5M0 262.5h2.5M621 262.5h-2.5M0 269.5h2.5M621 269.5h-2.5M0 276.5h2.5M621 276.5h-2.5" stroke="#a4a4a4" stroke-width="1" fill="none"/>
<path d="M2 18h1.25v36h-1.25zM5 18h1.25v36h-1.25zM7 18h1.25v36h-1.25zM10 18h1.25v36h-1.25zM12 18h1.25v36h-1.25zM15 18h1.25v36h-1.25zM17 18h1.25v36h-1.25zM20 18h1.25v36h-1.25zM22 18h1.25v36h-1.25zM25 18h1.25v36h-1.25zM27 18h1.25v36h-1.25zM30 18h1.25v36h-1.25zM32 18h1.25v36h-1.25zM35 18h1.25v36h-1.25zM37 18h1.25v36h-1.25zM40 18h1.25v36h-1.25zM42 18h1.25v36h-1.25zM45 18h1.25v36h-1.25zM47 18h1.25v36h-1.25zM50 18h1.25v36h-1.25zM52 18h1.25v36h-1.25zM55 18h1.25v36h-1.25zM57 18h1.25v36h-1.25zM60 18h1.25v36h-1.25zM62 18h1.25v36h-1.25zM65 18h1.25v36h-1.25zM67 18h1.25v36h-1.25zM70 18h1.25v36h-1.25zM72 18h1.25v36h-1.25zM75 18h1.25v36h-1.25zM77 18h1.25v36h-1.25zM80 18h1.25v36h-1.25zM82 18h1.25v36h-1.25zM85 18h1.25v36h-1.25zM87 18h1.25v36h-1.25zM90 18h1.25v36h-1.25zM92 18h1.25v36h-1.25zM95 18h1.25v36h-1.25zM97 18h1.25v36h-1.25zM100 18h1.25v36h-1.25zM102 18h1.25v36h-1.25zM105 18h1.25v36h-1.25zM107 18h1.25v36h-1.25zM110 18h1.25v36h-1.25zM112 18h1.25v36h-1.25zM115 18h1.25v36h-1.25zM117 18h1.25v36h-1.25zM120 18h1.25v36h-1.25zM122 18h1.25v36h-1.25zM125 18h1.25v36h-1.25zM127 18h1.25v36h-1.25zM130 18h1.25v36h-1.25zM132 18h1.25v36h-1.25zM135 18h1.25v36h-1.25zM137 18h1.25v36h-1.25zM140 18h1.25v36h-1.25zM142 18h1.25v36h-1.25zM145 18h1.25v36h-1.25zM147 18h1.25v36h-1.25zM150 18h1.25v36h-1.25zM152 18h1.25v36h-1.25zM155 18h1.25v36h-1.25zM157 18h1.25v36h-1.25zM160 18h1.25v36h-1.25zM162 18h1.25v36h-1.25zM165 18h1.25v36h-1.25zM167 18h1.25v36h-1.25zM170 18h1.25v36h-1.25zM172 18h1.25v36h-1.25zM175 18h1.25v36h-1.25zM177 18h1.25v36h-1.25zM180 18h1.25v36h-1.25zM182 18h1.25v36h-1.25zM185 18h1.25v36h-1.25zM187 18h1.25v36h-1.25zM190 18h1.25v36h-1.25zM192 18h1.25v36h-1.25zM195 18h1.25v36h-1.25zM197 18h1.25v36h-1.25zM200 18h1.25v36h-1.25zM202 18h1.25v36h-1.25zM205 18h1.25v36h-1.25zM207 18h1.25v36h-1.25zM210 18h1.25v36h-1.25zM212 18h1.25v36h-1.25zM215 18h1.25v36h-1.25zM217 18h1.25v36h-1.25zM220 18h1.25v36h-1.25zM222 18h1.25v36h-1.25zM225 18h1.25v36h-1.25zM227 18h1.25v36h-1.25zM230 18h1.25v36h-1.25zM232 18h1.25v36h-1.25zM235 18h1.25v36h-1.25zM237 18h1.25v36h-1.25zM240 18h1.25v36h-1.25zM242 18h1.25v36h-1.25zM245 18h1.25v36h-1.25zM247 18h1.25v36h-1.25zM250 18h1.25v36h-1.25zM252 18h1.25v36h-1.25zM255 18h1.25v36h-1.25zM257 18h1.25v36h-1.25zM260 18h1.25v36h-1.25zM262 18h1.25v36h-1.25zM265 18h1.25v36h-1.25zM267 18h1.25v36h-1.25zM270 18h1.25v36h-1.25zM272 18h1.25v36h-1.25zM275 18h1.25v36h-1.25zM277 18h1.25v36h-1.25zM280 18h1.25v36h-1.25zM282 18h1.25v36h-1.25zM285 18h1.25v36h-1.25zM287 18h1.25v36h-1.25zM290 18h1.25v36h-1.25zM292 18h1.25v36h-1.25zM295 18h1.25v36h-1.25zM297 18h1.25v36h-1.25zM300 18h1.25v36h-1.25zM302 18h1.25v36h-1.25zM305 18h1.25v36h-1.25zM307 18h1.25v36h-1.25zM310 18h1.25v36h-1.25zM312 18h1.25v36h-1.25zM315 18h1.25v36h-1.25zM317 18h1.25v36h-1.25zM320 18h1.25v36h-1.25zM322 18h1.25v36h-1.25zM325 18h1.25v36h-1.25zM327 18h1.25v36h-1.25zM330 18h1.25v36h-1.25zM332 18h1.25v36h-1.25zM335 18h1.25v36h-1.25zM337 18h1.25v36h-1.25zM340 18h1.25v36h-1.25zM342 18h1.25v36h-1.25zM345 18h1.25v36h-1.25zM347 18h1.25v36h-1.25zM350 18h1.25v36h-1.25zM352 18h1.25v36h-1.25zM355 18h1.25v36h-1.25zM357 18h1.25v36h-1.25zM360 18h1.25v36h-1.25zM362 18h1.25v36h-1.25zM365 18h1.25v36h-1.25zM367 18h1.25v36h-1.25zM370 18h1.25v36h-1.25zM372 18h1.25v36h-1.25zM375 18h1.25v36h-1.25zM377 18h1.25v36h-1.25zM380 18h1.25v36h-1.25zM382 18h1.25v36h-1.25zM385 18h1.25v36h-1.25zM387 18h1.25v36h-1.25zM390 18h1.25v36h-1.25zM392 18h1.25v36h-1.25zM395 18h1.25v36h-1.25zM397 18h1.25v36h-1.25zM400 18h1.25v36h-1.25zM402 18h1.25v36h-1.25zM405 18h1.25v36h-1.25zM407 18h1.25v36h-1.25zM410 18h1.25v36h-1.25zM412 18h1.25v36h-1.25zM415 18h1.25v36h-1.25zM417 18h1.25v36h-1.25zM420 18h1.25v36h-1.25zM422 18h1.25v36h-1.25zM425 18h1.25v36h-1.25zM427 18h1.25v36h-1.25zM430 18h1.25v36h-1.25zM432 18h1.25v36h-1.25zM435 18h1.25v36h-1.25zM437 18h1.25v36h-1.25zM440 18h1.25v36h-1.25zM442 18h1.25v36h-1.25zM445 18h1.25v36h-1.25zM447 18h1.25v36h-1.25zM450 18h1.25v36h-1.25zM452 18h1.25v36h-1.25zM455 18h1.25v36h-1.25zM457 18h1.25v36h-1.25zM460 18h1.25v36h-1.25zM462 18h1.25v36h-1.25zM465 18h1.25v36h-1.25zM467 18h1.25v36h-1.25zM470 18h1.25v36h-1.25zM472 18h1.25v36h-1.25zM475 18h1.25v36h-1.25zM477 18h1.25v36h-1.25zM480 18h1.25v36h-1.25zM482 18h1.25v36h-1.25zM485 18h1.25v36h-1.25zM487 18h1.25v36h-1.25zM490 18h1.25v36h-1.25zM492 18h1.25v36h-1.25zM495 18h1.25v36h-1.25zM497 18h1.25v36h-1.25zM500 18h1.25v36h-1.25zM502 18h1.25v36h-1.25zM505 18h1.25v36h-1.25zM507 18h1.25v36h-1.25zM510 18h1.25v36h-1.25zM512 18h1.25v36h-1.25zM515 18h1.25v36h-1.25zM517 18h1.25v36h-1.25zM520 18h1.25v36h-1.25zM522 18h1.25v36h-1.25zM525 18h1.25v36h-1.25zM527 18h1.25v36h-1.25zM530 18h1.25v36h-1.25zM532 18h1.25v36h-1.25zM535 18h1.25v36h-1.25zM537 18h1.25v36h-1.25zM540 18h1.25v36h-1.25zM542 18h1.25v36h-1.25zM545 18h1.25v36h-1.25zM547 18h1.25v36h-1.25zM550 18h1.25v36h-1.25zM552 18h1.25v36h-1.25zM555 18h1.25v36h-1.25zM557 18h1.25v36h-1.25zM560 18h1.25v36h-1.25zM562 18h1.25v36h-1.25zM565 18h1.25v36h-1.25zM567 18h1.25v36h-1.25zM570 18h1.25v36h-1.25zM572 18h1.25v36h-1.25zM575 18h1.25v36h-1.25zM577 18h1.25v36h-1.25zM580 18h1.25v36h-1.25zM582 18h1.25v36h-1.25zM585 18h1.25v36h-1.25zM587 18h1.25v36h-1.25zM590 18h1.25v36h-1.25zM592 18h1.25v36h-1.25zM595 18h1.25v36h-1.25zM597 18h1.25v36h-1.25zM600 18h1.25v36h-1.25zM602 18h1.25v36h-1.25zM605 18h1.25v36h-1.25zM607 18h1.25v36h-1.25zM610 18h1.25v36h-1.25zM612 18h1.25v36h-1.25zM615 18h1.25v36h-1.25zM617 18h1.25v36h-1.25zM620 18h1.25v36h-1.25z" fill="#fff"/>
<rect x="107" y="18" width="5" height="36" fill="#000"/>
<rect x="333.5" y="18" width="4.0" height="36" fill="#000"/>
<rect x="559" y="18" width="4" height="36" fill="#000"/>
<rect x="0" y="35" width="621" height="1" fill="#fff"/><rect x="0" y="37" width="621" height="1" fill="#fff"/>
<rect x="138" y="18" width="2" height="36" fill="#ff00ff"/>
<rect x="525" y="18" width="2" height="36" fill="#ff00ff"/>
<rect x="306.5" y="1.5" width="8" height="283" fill="#12325a" opacity=".72" stroke="none"/>
<path d="M302 -1 H318 V17.7 L310.2 23.5 L302 17.7 Z" fill="#3399ff"/>
<path d="M307 2 H314 V20.5 L310.5 23 L307 20.5 Z" fill="#1f5fa8"/>
<rect x="309" y="3" width="2" height="9.5" fill="#0a1626"/>
<path d="M306.5 284 V1.5 H314.5 V284" fill="none" stroke="#fff" stroke-width="1"/>
<path d="M-1 29.3 H19 L24 36 L19 42.7 H-1 Z" fill="#fff"/>
<path d="M593 125.4 L606.100 116.9 V124.1 H621 V126.8 H606.100 V133.8 Z" fill="#3399ff"/>
</svg>
<div class="t" style="left:2px;top:29.5px;font-size:13.5px;color:#000;transform:scaleX(.9)">B1</div>
<div class="tc" style="left:21px;width:80px;top:266px;font-size:17px;transform:scaleX(.89)">−40ms</div>
<div class="tc" style="left:145px;width:80px;top:266px;font-size:17px;transform:scaleX(.89)">−20ms</div>
<div class="tc" style="left:269px;width:80px;top:266px;font-size:17px;transform:scaleX(.89)">0s</div>
<div class="tc" style="left:393px;width:80px;top:266px;font-size:17px;transform:scaleX(.89)">20ms</div>
<div class="tc" style="left:517px;width:80px;top:266px;font-size:17px;transform:scaleX(.89)">40ms</div>
<div class="tr" style="right:1px;top:25px;font-size:16.5px;color:#ffff00;background:rgba(0,0,0,.55);padding:1px 0 0 1px;transform:scaleX(.9)">4.36V</div>
<div class="tr" style="right:1px;top:60px;font-size:16.5px;color:#ffff00;background:rgba(0,0,0,.55);padding:1px 0 0 1px;transform:scaleX(.9)">3.36V</div>
<div class="tr" style="right:1px;top:95px;font-size:16.5px;color:#ffff00;background:rgba(0,0,0,.55);padding:1px 0 0 1px;transform:scaleX(.9)">2.36V</div>
<div class="tr" style="right:1px;top:130px;font-size:16.5px;color:#ffff00;background:rgba(0,0,0,.55);padding:1px 0 0 1px;transform:scaleX(.9)">1.36V</div>
<div class="tr" style="right:1px;top:165px;font-size:16.5px;color:#ffff00;background:rgba(0,0,0,.55);padding:1px 0 0 1px;transform:scaleX(.9)">360mV</div>
<div class="tr" style="right:1px;top:200px;font-size:16.5px;color:#ffff00;background:rgba(0,0,0,.55);padding:1px 0 0 1px;transform:scaleX(.9)">−640mV</div>
<div class="tr" style="right:1px;top:235px;font-size:16.5px;color:#ffff00;background:rgba(0,0,0,.55);padding:1px 0 0 1px;transform:scaleX(.9)">−1.64V</div>
</div>
<svg style="left:13px;top:273px" width="26" height="15"><path d="M0 0 H16.7 L23.5 6.6 L16.7 14 H0 Z" fill="#ffff00"/></svg>
<div class="t" style="left:17.5px;top:273.5px;font-size:13.5px;color:#000">1</div>
<div class="a" style="left:15px;top:376px;width:622px;height:29px;background:#323642"></div>
<div class="t" style="left:22px;top:382.5px;font-size:16.5px;transform:scaleX(1.04)">Horiz Zoom</div>
<div class="a" style="left:122px;top:378px;width:100px;height:26px;background:#202126;border:1px solid #454852"></div>
<div class="t" style="left:124px;top:382px;font-size:15px;transform:scaleX(.93)">X</div>
<div class="t" style="left:144px;top:382px;font-size:15.5px;transform:scaleX(1.0)">64.0000</div>
<div class="a" style="left:322px;top:376px"></div>
<div class="t" style="left:322px;top:382.5px;font-size:16.5px;transform:scaleX(1.08)">Vert Zoom</div>
<div class="a" style="left:422px;top:378px;width:100px;height:26px;background:#202126;border:1px solid #454852"></div>
<div class="t" style="left:424px;top:382px;font-size:15px;transform:scaleX(.93)">X</div>
<div class="t" style="left:448px;top:382px;font-size:15.5px;transform:scaleX(1.0)">1.0101</div>
<div class="a" style="left:235px;top:378px;width:27px;height:26px;background:#373a45;border:1px solid #454852"></div>
<svg style="left:235px;top:378px" width="27" height="26"><path d="M6.8 13 H21.2 M14 5.8 V20.2" stroke="#fff" stroke-width="2.3" stroke-linecap="round"/></svg>
<div class="a" style="left:275px;top:378px;width:27px;height:26px;background:#373a45;border:1px solid #454852"></div>
<svg style="left:275px;top:378px" width="27" height="26"><path d="M6.8 13 H21.2" stroke="#fff" stroke-width="2.3" stroke-linecap="round"/></svg>
<div class="a" style="left:535px;top:378px;width:27px;height:26px;background:#373a45;border:1px solid #454852"></div>
<svg style="left:535px;top:378px" width="27" height="26"><path d="M6.8 13 H21.2 M14 5.8 V20.2" stroke="#fff" stroke-width="2.3" stroke-linecap="round"/></svg>
<div class="a" style="left:575px;top:378px;width:27px;height:26px;background:#373a45;border:1px solid #454852"></div>
<svg style="left:575px;top:378px" width="27" height="26"><path d="M6.8 13 H21.2" stroke="#fff" stroke-width="2.3" stroke-linecap="round"/></svg>
<div class="a" style="left:16px;top:406px;width:621px;height:283px;background:#000;overflow:hidden">
<svg style="left:0;top:0" width="620" height="283">
<rect x="0" y="85.3" width="45" height="4.4" fill="#8e8e00"/>
<rect x="0" y="86.2" width="45" height="2.4" fill="#a8a800"/>
<rect x="44" y="89.5" width="1" height="100.5" fill="#5c5c00"/>
<rect x="49" y="89.5" width="1" height="100.5" fill="#5c5c00"/>
<rect x="44" y="188.5" width="6" height="7" fill="#b4b400"/>
<rect x="49" y="85.3" width="24" height="4.4" fill="#8e8e00"/>
<rect x="49" y="86.2" width="24" height="2.4" fill="#a8a800"/>
<rect x="72" y="89.5" width="1" height="100.5" fill="#5c5c00"/>
<rect x="77" y="89.5" width="1" height="100.5" fill="#5c5c00"/>
<rect x="72" y="188.5" width="6" height="7" fill="#b4b400"/>
<rect x="77" y="85.3" width="16" height="4.4" fill="#8e8e00"/>
<rect x="77" y="86.2" width="16" height="2.4" fill="#a8a800"/>
<rect x="92" y="89.5" width="1" height="100.5" fill="#5c5c00"/>
<rect x="97" y="89.5" width="1" height="100.5" fill="#5c5c00"/>
<rect x="92" y="188.5" width="6" height="7" fill="#b4b400"/>
<rect x="97" y="85.3" width="16" height="4.4" fill="#8e8e00"/>
<rect x="97" y="86.2" width="16" height="2.4" fill="#a8a800"/>
<rect x="112" y="89.5" width="1" height="100.5" fill="#5c5c00"/>
<rect x="117" y="89.5" width="1" height="100.5" fill="#5c5c00"/>
<rect x="112" y="188.5" width="6" height="7" fill="#b4b400"/>
<rect x="117" y="85.3" width="14" height="4.4" fill="#8e8e00"/>
<rect x="117" y="86.2" width="14" height="2.4" fill="#a8a800"/>
<rect x="130" y="89.5" width="1" height="100.5" fill="#5c5c00"/>
<rect x="135" y="89.5" width="1" height="100.5" fill="#5c5c00"/>
<rect x="130" y="188.5" width="6" height="7" fill="#b4b400"/>
<rect x="135" y="85.3" width="27" height="4.4" fill="#8e8e00"/>
<rect x="135" y="86.2" width="27" height="2.4" fill="#a8a800"/>
<rect x="161" y="89.5" width="1" height="100.5" fill="#5c5c00"/>
<rect x="166" y="89.5" width="1" height="100.5" fill="#5c5c00"/>
<rect x="161" y="188.5" width="6" height="7" fill="#b4b400"/>
<rect x="166" y="85.3" width="14" height="4.4" fill="#8e8e00"/>
<rect x="166" y="86.2" width="14" height="2.4" fill="#a8a800"/>
<rect x="179" y="89.5" width="1" height="100.5" fill="#5c5c00"/>
<rect x="184" y="89.5" width="1" height="100.5" fill="#5c5c00"/>
<rect x="179" y="188.5" width="6" height="7" fill="#b4b400"/>
<rect x="184" y="85.3" width="21" height="4.4" fill="#8e8e00"/>
<rect x="184" y="86.2" width="21" height="2.4" fill="#a8a800"/>
<rect x="204" y="89.5" width="1" height="100.5" fill="#5c5c00"/>
<rect x="209" y="89.5" width="1" height="100.5" fill="#5c5c00"/>
<rect x="204" y="188.5" width="6" height="7" fill="#b4b400"/>
<rect x="209" y="85.3" width="12" height="4.4" fill="#8e8e00"/>
<rect x="209" y="86.2" width="12" height="2.4" fill="#a8a800"/>
<rect x="220" y="89.5" width="1" height="100.5" fill="#5c5c00"/>
<rect x="225" y="89.5" width="1" height="100.5" fill="#5c5c00"/>
<rect x="220" y="188.5" width="6" height="7" fill="#b4b400"/>
<rect x="225" y="85.3" width="21" height="4.4" fill="#8e8e00"/>
<rect x="225" y="86.2" width="21" height="2.4" fill="#a8a800"/>
<rect x="245" y="89.5" width="1" height="100.5" fill="#5c5c00"/>
<rect x="250" y="89.5" width="1" height="100.5" fill="#5c5c00"/>
<rect x="245" y="188.5" width="6" height="7" fill="#b4b400"/>
<rect x="250" y="85.3" width="61" height="4.4" fill="#8e8e00"/>
<rect x="250" y="86.2" width="61" height="2.4" fill="#a8a800"/>
<rect x="310" y="89.5" width="1" height="100.5" fill="#5c5c00"/>
<rect x="315" y="89.5" width="1" height="100.5" fill="#5c5c00"/>
<rect x="310" y="188.5" width="6" height="7" fill="#b4b400"/>
<rect x="315" y="85.3" width="10" height="4.4" fill="#8e8e00"/>
<rect x="315" y="86.2" width="10" height="2.4" fill="#a8a800"/>
<rect x="324" y="89.5" width="1" height="100.5" fill="#5c5c00"/>
<rect x="329" y="89.5" width="1" height="100.5" fill="#5c5c00"/>
<rect x="324" y="188.5" width="6" height="7" fill="#b4b400"/>
<rect x="329" y="85.3" width="16" height="4.4" fill="#8e8e00"/>
<rect x="329" y="86.2" width="16" height="2.4" fill="#a8a800"/>
<rect x="344" y="89.5" width="1" height="100.5" fill="#5c5c00"/>
<rect x="349" y="89.5" width="1" height="100.5" fill="#5c5c00"/>
<rect x="344" y="188.5" width="6" height="7" fill="#b4b400"/>
<rect x="349" y="85.3" width="15" height="4.4" fill="#8e8e00"/>
<rect x="349" y="86.2" width="15" height="2.4" fill="#a8a800"/>
<rect x="363" y="89.5" width="1" height="100.5" fill="#5c5c00"/>
<rect x="368" y="89.5" width="1" height="100.5" fill="#5c5c00"/>
<rect x="363" y="188.5" width="6" height="7" fill="#b4b400"/>
<rect x="368" y="85.3" width="15" height="4.4" fill="#8e8e00"/>
<rect x="368" y="86.2" width="15" height="2.4" fill="#a8a800"/>
<rect x="382" y="89.5" width="1" height="100.5" fill="#5c5c00"/>
<rect x="387" y="89.5" width="1" height="100.5" fill="#5c5c00"/>
<rect x="382" y="188.5" width="6" height="7" fill="#b4b400"/>
<rect x="387" y="85.3" width="27" height="4.4" fill="#8e8e00"/>
<rect x="387" y="86.2" width="27" height="2.4" fill="#a8a800"/>
<rect x="413" y="89.5" width="1" height="100.5" fill="#5c5c00"/>
<rect x="418" y="89.5" width="1" height="100.5" fill="#5c5c00"/>
<rect x="413" y="188.5" width="6" height="7" fill="#b4b400"/>
<rect x="418" y="85.3" width="14" height="4.4" fill="#8e8e00"/>
<rect x="418" y="86.2" width="14" height="2.4" fill="#a8a800"/>
<rect x="431" y="89.5" width="1" height="100.5" fill="#5c5c00"/>
<rect x="436" y="89.5" width="1" height="100.5" fill="#5c5c00"/>
<rect x="431" y="188.5" width="6" height="7" fill="#b4b400"/>
<rect x="436" y="85.3" width="21" height="4.4" fill="#8e8e00"/>
<rect x="436" y="86.2" width="21" height="2.4" fill="#a8a800"/>
<rect x="456" y="89.5" width="1" height="100.5" fill="#5c5c00"/>
<rect x="461" y="89.5" width="1" height="100.5" fill="#5c5c00"/>
<rect x="456" y="188.5" width="6" height="7" fill="#b4b400"/>
<rect x="461" y="85.3" width="12" height="4.4" fill="#8e8e00"/>
<rect x="461" y="86.2" width="12" height="2.4" fill="#a8a800"/>
<rect x="472" y="89.5" width="1" height="100.5" fill="#5c5c00"/>
<rect x="477" y="89.5" width="1" height="100.5" fill="#5c5c00"/>
<rect x="472" y="188.5" width="6" height="7" fill="#b4b400"/>
<rect x="477" y="85.3" width="35" height="4.4" fill="#8e8e00"/>
<rect x="477" y="86.2" width="35" height="2.4" fill="#a8a800"/>
<rect x="511" y="89.5" width="1" height="100.5" fill="#5c5c00"/>
<rect x="516" y="89.5" width="1" height="100.5" fill="#5c5c00"/>
<rect x="511" y="188.5" width="6" height="7" fill="#b4b400"/>
<rect x="516" y="85.3" width="61" height="4.4" fill="#8e8e00"/>
<rect x="516" y="86.2" width="61" height="2.4" fill="#a8a800"/>
<rect x="576" y="89.5" width="1" height="100.5" fill="#5c5c00"/>
<rect x="581" y="89.5" width="1" height="100.5" fill="#5c5c00"/>
<rect x="576" y="188.5" width="6" height="7" fill="#b4b400"/>
<rect x="581" y="85.3" width="10" height="4.4" fill="#8e8e00"/>
<rect x="581" y="86.2" width="10" height="2.4" fill="#a8a800"/>
<rect x="590" y="89.5" width="1" height="100.5" fill="#5c5c00"/>
<rect x="595" y="89.5" width="1" height="100.5" fill="#5c5c00"/>
<rect x="590" y="188.5" width="6" height="7" fill="#b4b400"/>
<rect x="595" y="85.3" width="15" height="4.4" fill="#8e8e00"/>
<rect x="595" y="86.2" width="15" height="2.4" fill="#a8a800"/>
<rect x="609" y="89.5" width="1" height="100.5" fill="#5c5c00"/>
<rect x="614" y="89.5" width="1" height="100.5" fill="#5c5c00"/>
<rect x="609" y="188.5" width="6" height="7" fill="#b4b400"/>
<rect x="614" y="85.3" width="7" height="4.4" fill="#8e8e00"/>
<rect x="614" y="86.2" width="7" height="2.4" fill="#a8a800"/>
<path d="M62 6.5h1M62 13.5h1M62 20.5h1M62 27.5h1M62 35.5h1M62 42.5h1M62 49.5h1M62 56.5h1M62 63.5h1M62 70.5h1M62 77.5h1M62 84.5h1M62 91.5h1M62 98.5h1M62 106.5h1M62 113.5h1M62 120.5h1M62 127.5h1M62 134.5h1M62 141.5h1M62 148.5h1M62 155.5h1M62 162.5h1M62 169.5h1M62 177.5h1M62 184.5h1M62 191.5h1M62 198.5h1M62 205.5h1M62 212.5h1M62 219.5h1M62 226.5h1M62 233.5h1M62 240.5h1M62 248.5h1M62 255.5h1M62 262.5h1M62 269.5h1M62 276.5h1M124 6.5h1M124 13.5h1M124 20.5h1M124 27.5h1M124 35.5h1M124 42.5h1M124 49.5h1M124 56.5h1M124 63.5h1M124 70.5h1M124 77.5h1M124 84.5h1M124 91.5h1M124 98.5h1M124 106.5h1M124 113.5h1M124 120.5h1M124 127.5h1M124 134.5h1M124 141.5h1M124 148.5h1M124 155.5h1M124 162.5h1M124 169.5h1M124 177.5h1M124 184.5h1M124 191.5h1M124 198.5h1M124 205.5h1M124 212.5h1M124 219.5h1M124 226.5h1M124 233.5h1M124 240.5h1M124 248.5h1M124 255.5h1M124 262.5h1M124 269.5h1M124 276.5h1M186 6.5h1M186 13.5h1M186 20.5h1M186 27.5h1M186 35.5h1M186 42.5h1M186 49.5h1M186 56.5h1M186 63.5h1M186 70.5h1M186 77.5h1M186 84.5h1M186 91.5h1M186 98.5h1M186 106.5h1M186 113.5h1M186 120.5h1M186 127.5h1M186 134.5h1M186 141.5h1M186 148.5h1M186 155.5h1M186 162.5h1M186 169.5h1M186 177.5h1M186 184.5h1M186 191.5h1M186 198.5h1M186 205.5h1M186 212.5h1M186 219.5h1M186 226.5h1M186 233.5h1M186 240.5h1M186 248.5h1M186 255.5h1M186 262.5h1M186 269.5h1M186 276.5h1M248 6.5h1M248 13.5h1M248 20.5h1M248 27.5h1M248 35.5h1M248 42.5h1M248 49.5h1M248 56.5h1M248 63.5h1M248 70.5h1M248 77.5h1M248 84.5h1M248 91.5h1M248 98.5h1M248 106.5h1M248 113.5h1M248 120.5h1M248 127.5h1M248 134.5h1M248 141.5h1M248 148.5h1M248 155.5h1M248 162.5h1M248 169.5h1M248 177.5h1M248 184.5h1M248 191.5h1M248 198.5h1M248 205.5h1M248 212.5h1M248 219.5h1M248 226.5h1M248 233.5h1M248 240.5h1M248 248.5h1M248 255.5h1M248 262.5h1M248 269.5h1M248 276.5h1M372 6.5h1M372 13.5h1M372 20.5h1M372 27.5h1M372 35.5h1M372 42.5h1M372 49.5h1M372 56.5h1M372 63.5h1M372 70.5h1M372 77.5h1M372 84.5h1M372 91.5h1M372 98.5h1M372 106.5h1M372 113.5h1M372 120.5h1M372 127.5h1M372 134.5h1M372 141.5h1M372 148.5h1M372 155.5h1M372 162.5h1M372 169.5h1M372 177.5h1M372 184.5h1M372 191.5h1M372 198.5h1M372 205.5h1M372 212.5h1M372 219.5h1M372 226.5h1M372 233.5h1M372 240.5h1M372 248.5h1M372 255.5h1M372 262.5h1M372 269.5h1M372 276.5h1M434 6.5h1M434 13.5h1M434 20.5h1M434 27.5h1M434 35.5h1M434 42.5h1M434 49.5h1M434 56.5h1M434 63.5h1M434 70.5h1M434 77.5h1M434 84.5h1M434 91.5h1M434 98.5h1M434 106.5h1M434 113.5h1M434 120.5h1M434 127.5h1M434 134.5h1M434 141.5h1M434 148.5h1M434 155.5h1M434 162.5h1M434 169.5h1M434 177.5h1M434 184.5h1M434 191.5h1M434 198.5h1M434 205.5h1M434 212.5h1M434 219.5h1M434 226.5h1M434 233.5h1M434 240.5h1M434 248.5h1M434 255.5h1M434 262.5h1M434 269.5h1M434 276.5h1M496 6.5h1M496 13.5h1M496 20.5h1M496 27.5h1M496 35.5h1M496 42.5h1M496 49.5h1M496 56.5h1M496 63.5h1M496 70.5h1M496 77.5h1M496 84.5h1M496 91.5h1M496 98.5h1M496 106.5h1M496 113.5h1M496 120.5h1M496 127.5h1M496 134.5h1M496 141.5h1M496 148.5h1M496 155.5h1M496 162.5h1M496 169.5h1M496 177.5h1M496 184.5h1M496 191.5h1M496 198.5h1M496 205.5h1M496 212.5h1M496 219.5h1M496 226.5h1M496 233.5h1M496 240.5h1M496 248.5h1M496 255.5h1M496 262.5h1M496 269.5h1M496 276.5h1M558 6.5h1M558 13.5h1M558 20.5h1M558 27.5h1M558 35.5h1M558 42.5h1M558 49.5h1M558 56.5h1M558 63.5h1M558 70.5h1M558 77.5h1M558 84.5h1M558 91.5h1M558 98.5h1M558 106.5h1M558 113.5h1M558 120.5h1M558 127.5h1M558 134.5h1M558 141.5h1M558 148.5h1M558 155.5h1M558 162.5h1M558 169.5h1M558 177.5h1M558 184.5h1M558 191.5h1M558 198.5h1M558 205.5h1M558 212.5h1M558 219.5h1M558 226.5h1M558 233.5h1M558 240.5h1M558 248.5h1M558 255.5h1M558 262.5h1M558 269.5h1M558 276.5h1M12 35.5h1M25 35.5h1M37 35.5h1M50 35.5h1M62 35.5h1M74 35.5h1M87 35.5h1M99 35.5h1M112 35.5h1M124 35.5h1M136 35.5h1M149 35.5h1M161 35.5h1M174 35.5h1M186 35.5h1M198 35.5h1M211 35.5h1M223 35.5h1M236 35.5h1M248 35.5h1M260 35.5h1M273 35.5h1M285 35.5h1M298 35.5h1M310 35.5h1M322 35.5h1M335 35.5h1M347 35.5h1M360 35.5h1M372 35.5h1M384 35.5h1M397 35.5h1M409 35.5h1M422 35.5h1M434 35.5h1M446 35.5h1M459 35.5h1M471 35.5h1M484 35.5h1M496 35.5h1M508 35.5h1M521 35.5h1M533 35.5h1M546 35.5h1M558 35.5h1M570 35.5h1M583 35.5h1M595 35.5h1M608 35.5h1M12 70.5h1M25 70.5h1M37 70.5h1M50 70.5h1M62 70.5h1M74 70.5h1M87 70.5h1M99 70.5h1M112 70.5h1M124 70.5h1M136 70.5h1M149 70.5h1M161 70.5h1M174 70.5h1M186 70.5h1M198 70.5h1M211 70.5h1M223 70.5h1M236 70.5h1M248 70.5h1M260 70.5h1M273 70.5h1M285 70.5h1M298 70.5h1M310 70.5h1M322 70.5h1M335 70.5h1M347 70.5h1M360 70.5h1M372 70.5h1M384 70.5h1M397 70.5h1M409 70.5h1M422 70.5h1M434 70.5h1M446 70.5h1M459 70.5h1M471 70.5h1M484 70.5h1M496 70.5h1M508 70.5h1M521 70.5h1M533 70.5h1M546 70.5h1M558 70.5h1M570 70.5h1M583 70.5h1M595 70.5h1M608 70.5h1M12 106.5h1M25 106.5h1M37 106.5h1M50 106.5h1M62 106.5h1M74 106.5h1M87 106.5h1M99 106.5h1M112 106.5h1M124 106.5h1M136 106.5h1M149 106.5h1M161 106.5h1M174 106.5h1M186 106.5h1M198 106.5h1M211 106.5h1M223 106.5h1M236 106.5h1M248 106.5h1M260 106.5h1M273 106.5h1M285 106.5h1M298 106.5h1M310 106.5h1M322 106.5h1M335 106.5h1M347 106.5h1M360 106.5h1M372 106.5h1M384 106.5h1M397 106.5h1M409 106.5h1M422 106.5h1M434 106.5h1M446 106.5h1M459 106.5h1M471 106.5h1M484 106.5h1M496 106.5h1M508 106.5h1M521 106.5h1M533 106.5h1M546 106.5h1M558 106.5h1M570 106.5h1M583 106.5h1M595 106.5h1M608 106.5h1M12 177.5h1M25 177.5h1M37 177.5h1M50 177.5h1M62 177.5h1M74 177.5h1M87 177.5h1M99 177.5h1M112 177.5h1M124 177.5h1M136 177.5h1M149 177.5h1M161 177.5h1M174 177.5h1M186 177.5h1M198 177.5h1M211 177.5h1M223 177.5h1M236 177.5h1M248 177.5h1M260 177.5h1M273 177.5h1M285 177.5h1M298 177.5h1M310 177.5h1M322 177.5h1M335 177.5h1M347 177.5h1M360 177.5h1M372 177.5h1M384 177.5h1M397 177.5h1M409 177.5h1M422 177.5h1M434 177.5h1M446 177.5h1M459 177.5h1M471 177.5h1M484 177.5h1M496 177.5h1M508 177.5h1M521 177.5h1M533 177.5h1M546 177.5h1M558 177.5h1M570 177.5h1M583 177.5h1M595 177.5h1M608 177.5h1M12 212.5h1M25 212.5h1M37 212.5h1M50 212.5h1M62 212.5h1M74 212.5h1M87 212.5h1M99 212.5h1M112 212.5h1M124 212.5h1M136 212.5h1M149 212.5h1M161 212.5h1M174 212.5h1M186 212.5h1M198 212.5h1M211 212.5h1M223 212.5h1M236 212.5h1M248 212.5h1M260 212.5h1M273 212.5h1M285 212.5h1M298 212.5h1M310 212.5h1M322 212.5h1M335 212.5h1M347 212.5h1M360 212.5h1M372 212.5h1M384 212.5h1M397 212.5h1M409 212.5h1M422 212.5h1M434 212.5h1M446 212.5h1M459 212.5h1M471 212.5h1M484 212.5h1M496 212.5h1M508 212.5h1M521 212.5h1M533 212.5h1M546 212.5h1M558 212.5h1M570 212.5h1M583 212.5h1M595 212.5h1M608 212.5h1M12 248.5h1M25 248.5h1M37 248.5h1M50 248.5h1M62 248.5h1M74 248.5h1M87 248.5h1M99 248.5h1M112 248.5h1M124 248.5h1M136 248.5h1M149 248.5h1M161 248.5h1M174 248.5h1M186 248.5h1M198 248.5h1M211 248.5h1M223 248.5h1M236 248.5h1M248 248.5h1M260 248.5h1M273 248.5h1M285 248.5h1M298 248.5h1M310 248.5h1M322 248.5h1M335 248.5h1M347 248.5h1M360 248.5h1M372 248.5h1M384 248.5h1M397 248.5h1M409 248.5h1M422 248.5h1M434 248.5h1M446 248.5h1M459 248.5h1M471 248.5h1M484 248.5h1M496 248.5h1M508 248.5h1M521 248.5h1M533 248.5h1M546 248.5h1M558 248.5h1M570 248.5h1M583 248.5h1M595 248.5h1M608 248.5h1" stroke="#a2a2b2" stroke-width="1" fill="none"/><path d="M310 1.5h1M310 4.5h1M310 6.5h1M310 8.5h1M310 11.5h1M310 13.5h1M310 16.5h1M310 18.5h1M310 20.5h1M310 23.5h1M310 25.5h1M310 27.5h1M310 30.5h1M310 32.5h1M310 35.5h1M310 37.5h1M310 39.5h1M310 42.5h1M310 44.5h1M310 46.5h1M310 49.5h1M310 51.5h1M310 53.5h1M310 56.5h1M310 58.5h1M310 61.5h1M310 63.5h1M310 65.5h1M310 68.5h1M310 70.5h1M310 72.5h1M310 75.5h1M310 77.5h1M310 79.5h1M310 82.5h1M310 84.5h1M310 87.5h1M310 89.5h1M310 91.5h1M310 94.5h1M310 96.5h1M310 98.5h1M310 101.5h1M310 103.5h1M310 106.5h1M310 108.5h1M310 110.5h1M310 113.5h1M310 115.5h1M310 117.5h1M310 120.5h1M310 122.5h1M310 124.5h1M310 127.5h1M310 129.5h1M310 132.5h1M310 134.5h1M310 136.5h1M310 139.5h1M310 141.5h1M310 143.5h1M310 146.5h1M310 148.5h1M310 150.5h1M310 153.5h1M310 155.5h1M310 158.5h1M310 160.5h1M310 162.5h1M310 165.5h1M310 167.5h1M310 169.5h1M310 172.5h1M310 174.5h1M310 177.5h1M310 179.5h1M310 181.5h1M310 184.5h1M310 186.5h1M310 188.5h1M310 191.5h1M310 193.5h1M310 195.5h1M310 198.5h1M310 200.5h1M310 203.5h1M310 205.5h1M310 207.5h1M310 210.5h1M310 212.5h1M310 214.5h1M310 217.5h1M310 219.5h1M310 221.5h1M310 224.5h1M310 226.5h1M310 229.5h1M310 231.5h1M310 233.5h1M310 236.5h1M310 238.5h1M310 240.5h1M310 243.5h1M310 245.5h1M310 248.5h1M310 250.5h1M310 252.5h1M310 255.5h1M310 257.5h1M310 259.5h1M310 262.5h1M310 264.5h1M310 266.5h1M310 269.5h1M310 271.5h1M310 274.5h1M310 276.5h1M310 278.5h1M310 281.5h1M2 141.5h1M5 141.5h1M7 141.5h1M10 141.5h1M12 141.5h1M15 141.5h1M17 141.5h1M20 141.5h1M22 141.5h1M25 141.5h1M27 141.5h1M30 141.5h1M32 141.5h1M35 141.5h1M37 141.5h1M40 141.5h1M42 141.5h1M45 141.5h1M47 141.5h1M50 141.5h1M52 141.5h1M55 141.5h1M57 141.5h1M60 141.5h1M62 141.5h1M64 141.5h1M67 141.5h1M69 141.5h1M72 141.5h1M74 141.5h1M77 141.5h1M79 141.5h1M82 141.5h1M84 141.5h1M87 141.5h1M89 141.5h1M92 141.5h1M94 141.5h1M97 141.5h1M99 141.5h1M102 141.5h1M104 141.5h1M107 141.5h1M109 141.5h1M112 141.5h1M114 141.5h1M117 141.5h1M119 141.5h1M122 141.5h1M124 141.5h1M126 141.5h1M129 141.5h1M131 141.5h1M134 141.5h1M136 141.5h1M139 141.5h1M141 141.5h1M144 141.5h1M146 141.5h1M149 141.5h1M151 141.5h1M154 141.5h1M156 141.5h1M159 141.5h1M161 141.5h1M164 141.5h1M166 141.5h1M169 141.5h1M171 141.5h1M174 141.5h1M176 141.5h1M179 141.5h1M181 141.5h1M184 141.5h1M186 141.5h1M188 141.5h1M191 141.5h1M193 141.5h1M196 141.5h1M198 141.5h1M201 141.5h1M203 141.5h1M206 141.5h1M208 141.5h1M211 141.5h1M213 141.5h1M216 141.5h1M218 141.5h1M221 141.5h1M223 141.5h1M226 141.5h1M228 141.5h1M231 141.5h1M233 141.5h1M236 141.5h1M238 141.5h1M241 141.5h1M243 141.5h1M246 141.5h1M248 141.5h1M250 141.5h1M253 141.5h1M255 141.5h1M258 141.5h1M260 141.5h1M263 141.5h1M265 141.5h1M268 141.5h1M270 141.5h1M273 141.5h1M275 141.5h1M278 141.5h1M280 141.5h1M283 141.5h1M285 141.5h1M288 141.5h1M290 141.5h1M293 141.5h1M295 141.5h1M298 141.5h1M300 141.5h1M303 141.5h1M305 141.5h1M308 141.5h1M310 141.5h1M312 141.5h1M315 141.5h1M317 141.5h1M320 141.5h1M322 141.5h1M325 141.5h1M327 141.5h1M330 141.5h1M332 141.5h1M335 141.5h1M337 141.5h1M340 141.5h1M342 141.5h1M345 141.5h1M347 141.5h1M350 141.5h1M352 141.5h1M355 141.5h1M357 141.5h1M360 141.5h1M362 141.5h1M365 141.5h1M367 141.5h1M370 141.5h1M372 141.5h1M374 141.5h1M377 141.5h1M379 141.5h1M382 141.5h1M384 141.5h1M387 141.5h1M389 141.5h1M392 141.5h1M394 141.5h1M397 141.5h1M399 141.5h1M402 141.5h1M404 141.5h1M407 141.5h1M409 141.5h1M412 141.5h1M414 141.5h1M417 141.5h1M419 141.5h1M422 141.5h1M424 141.5h1M427 141.5h1M429 141.5h1M432 141.5h1M434 141.5h1M436 141.5h1M439 141.5h1M441 141.5h1M444 141.5h1M446 141.5h1M449 141.5h1M451 141.5h1M454 141.5h1M456 141.5h1M459 141.5h1M461 141.5h1M464 141.5h1M466 141.5h1M469 141.5h1M471 141.5h1M474 141.5h1M476 141.5h1M479 141.5h1M481 141.5h1M484 141.5h1M486 141.5h1M489 141.5h1M491 141.5h1M494 141.5h1M496 141.5h1M498 141.5h1M501 141.5h1M503 141.5h1M506 141.5h1M508 141.5h1M511 141.5h1M513 141.5h1M516 141.5h1M518 141.5h1M521 141.5h1M523 141.5h1M526 141.5h1M528 141.5h1M531 141.5h1M533 141.5h1M536 141.5h1M538 141.5h1M541 141.5h1M543 141.5h1M546 141.5h1M548 141.5h1M551 141.5h1M553 141.5h1M556 141.5h1M558 141.5h1M560 141.5h1M563 141.5h1M565 141.5h1M568 141.5h1M570 141.5h1M573 141.5h1M575 141.5h1M578 141.5h1M580 141.5h1M583 141.5h1M585 141.5h1M588 141.5h1M590 141.5h1M593 141.5h1M595 141.5h1M598 141.5h1M600 141.5h1M603 141.5h1M605 141.5h1M608 141.5h1M610 141.5h1M613 141.5h1M615 141.5h1M618 141.5h1" stroke="#a2a2b2" stroke-width="1" fill="none"/><path d="M12.5 140.0v3M25.5 140.0v3M37.5 140.0v3M50.5 140.0v3M62.5 140.0v3M74.5 140.0v3M87.5 140.0v3M99.5 140.0v3M112.5 140.0v3M124.5 140.0v3M136.5 140.0v3M149.5 140.0v3M161.5 140.0v3M174.5 140.0v3M186.5 140.0v3M198.5 140.0v3M211.5 140.0v3M223.5 140.0v3M236.5 140.0v3M248.5 140.0v3M260.5 140.0v3M273.5 140.0v3M285.5 140.0v3M298.5 140.0v3M310.5 140.0v3M322.5 140.0v3M335.5 140.0v3M347.5 140.0v3M360.5 140.0v3M372.5 140.0v3M384.5 140.0v3M397.5 140.0v3M409.5 140.0v3M422.5 140.0v3M434.5 140.0v3M446.5 140.0v3M459.5 140.0v3M471.5 140.0v3M484.5 140.0v3M496.5 140.0v3M508.5 140.0v3M521.5 140.0v3M533.5 140.0v3M546.5 140.0v3M558.5 140.0v3M570.5 140.0v3M583.5 140.0v3M595.5 140.0v3M608.5 140.0v3M309 6.5h3M309 13.5h3M309 20.5h3M309 27.5h3M309 35.5h3M309 42.5h3M309 49.5h3M309 56.5h3M309 63.5h3M309 70.5h3M309 77.5h3M309 84.5h3M309 91.5h3M309 98.5h3M309 106.5h3M309 113.5h3M309 120.5h3M309 127.5h3M309 134.5h3M309 141.5h3M309 148.5h3M309 155.5h3M309 162.5h3M309 169.5h3M309 177.5h3M309 184.5h3M309 191.5h3M309 198.5h3M309 205.5h3M309 212.5h3M309 219.5h3M309 226.5h3M309 233.5h3M309 240.5h3M309 248.5h3M309 255.5h3M309 262.5h3M309 269.5h3M309 276.5h3" stroke="#a2a2b2" stroke-width="1" fill="none" opacity=".85"/><path d="M12.5 0v2.5M12.5 284v-2.5M25.5 0v2.5M25.5 284v-2.5M37.5 0v2.5M37.5 284v-2.5M50.5 0v2.5M50.5 284v-2.5M62.5 0v5M62.5 284v-5M74.5 0v2.5M74.5 284v-2.5M87.5 0v2.5M87.5 284v-2.5M99.5 0v2.5M99.5 284v-2.5M112.5 0v2.5M112.5 284v-2.5M124.5 0v5M124.5 284v-5M136.5 0v2.5M136.5 284v-2.5M149.5 0v2.5M149.5 284v-2.5M161.5 0v2.5M161.5 284v-2.5M174.5 0v2.5M174.5 284v-2.5M186.5 0v5M186.5 284v-5M198.5 0v2.5M198.5 284v-2.5M211.5 0v2.5M211.5 284v-2.5M223.5 0v2.5M223.5 284v-2.5M236.5 0v2.5M236.5 284v-2.5M248.5 0v5M248.5 284v-5M260.5 0v2.5M260.5 284v-2.5M273.5 0v2.5M273.5 284v-2.5M285.5 0v2.5M285.5 284v-2.5M298.5 0v2.5M298.5 284v-2.5M310.5 0v5M310.5 284v-5M322.5 0v2.5M322.5 284v-2.5M335.5 0v2.5M335.5 284v-2.5M347.5 0v2.5M347.5 284v-2.5M360.5 0v2.5M360.5 284v-2.5M372.5 0v5M372.5 284v-5M384.5 0v2.5M384.5 284v-2.5M397.5 0v2.5M397.5 284v-2.5M409.5 0v2.5M409.5 284v-2.5M422.5 0v2.5M422.5 284v-2.5M434.5 0v5M434.5 284v-5M446.5 0v2.5M446.5 284v-2.5M459.5 0v2.5M459.5 284v-2.5M471.5 0v2.5M471.5 284v-2.5M484.5 0v2.5M484.5 284v-2.5M496.5 0v5M496.5 284v-5M508.5 0v2.5M508.5 284v-2.5M521.5 0v2.5M521.5 284v-2.5M533.5 0v2.5M533.5 284v-2.5M546.5 0v2.5M546.5 284v-2.5M558.5 0v5M558.5 284v-5M570.5 0v2.5M570.5 284v-2.5M583.5 0v2.5M583.5 284v-2.5M595.5 0v2.5M595.5 284v-2.5M608.5 0v2.5M608.5 284v-2.5M0 6.5h2.5M621 6.5h-2.5M0 13.5h2.5M621 13.5h-2.5M0 20.5h2.5M621 20.5h-2.5M0 27.5h2.5M621 27.5h-2.5M0 35.5h5M621 35.5h-5M0 42.5h2.5M621 42.5h-2.5M0 49.5h2.5M621 49.5h-2.5M0 56.5h2.5M621 56.5h-2.5M0 63.5h2.5M621 63.5h-2.5M0 70.5h5M621 70.5h-5M0 77.5h2.5M621 77.5h-2.5M0 84.5h2.5M621 84.5h-2.5M0 91.5h2.5M621 91.5h-2.5M0 98.5h2.5M621 98.5h-2.5M0 106.5h5M621 106.5h-5M0 113.5h2.5M621 113.5h-2.5M0 120.5h2.5M621 120.5h-2.5M0 127.5h2.5M621 127.5h-2.5M0 134.5h2.5M621 134.5h-2.5M0 141.5h5M621 141.5h-5M0 148.5h2.5M621 148.5h-2.5M0 155.5h2.5M621 155.5h-2.5M0 162.5h2.5M621 162.5h-2.5M0 169.5h2.5M621 169.5h-2.5M0 177.5h5M621 177.5h-5M0 184.5h2.5M621 184.5h-2.5M0 191.5h2.5M621 191.5h-2.5M0 198.5h2.5M621 198.5h-2.5M0 205.5h2.5M621 205.5h-2.5M0 212.5h5M621 212.5h-5M0 219.5h2.5M621 219.5h-2.5M0 226.5h2.5M621 226.5h-2.5M0 233.5h2.5M621 233.5h-2.5M0 240.5h2.5M621 240.5h-2.5M0 248.5h5M621 248.5h-5M0 255.5h2.5M621 255.5h-2.5M0 262.5h2.5M621 262.5h-2.5M0 269.5h2.5M621 269.5h-2.5M0 276.5h2.5M621 276.5h-2.5" stroke="#a4a4a4" stroke-width="1" fill="none"/>
<path d="M0 35.5 H621 M0 37.5 H621" stroke="#fff" stroke-width="1" fill="none"/>
<path d="M4.5 18.5 H28.5 L33.5 23.5 V49.5 L28.5 54.5 H4.5 L-0.5 49.5 V23.5 Z" fill="#000" stroke="#ee10ee" stroke-width="1"/>
<path d="M73.5 18.5 H97.5 L102.5 23.5 V49.5 L97.5 54.5 H73.5 L68.5 49.5 V23.5 Z" fill="#000" stroke="#fff" stroke-width="1"/>
<path d="M107.5 18.5 H132.5 L137.5 23.5 V49.5 L132.5 54.5 H107.5 L102.5 49.5 V23.5 Z" fill="#000" stroke="#fff" stroke-width="1"/>
<path d="M176.5 18.5 H201.5 L206.5 23.5 V49.5 L201.5 54.5 H176.5 L171.5 49.5 V23.5 Z" fill="#000" stroke="#ee10ee" stroke-width="1"/>
<path d="M384.5 18.5 H408.5 L413.5 23.5 V49.5 L408.5 54.5 H384.5 L379.5 49.5 V23.5 Z" fill="#000" stroke="#fff" stroke-width="1"/>
<path d="M453.5 18.5 H477.5 L482.5 23.5 V49.5 L477.5 54.5 H453.5 L448.5 49.5 V23.5 Z" fill="#000" stroke="#ee10ee" stroke-width="1"/>
<path d="M487.5 18.5 H512.5 L517.5 23.5 V49.5 L512.5 54.5 H487.5 L482.5 49.5 V23.5 Z" fill="#000" stroke="#fff" stroke-width="1"/>
<path d="M522.5 18.5 H581.5 L586.5 23.5 V49.5 L581.5 54.5 H522.5 L517.5 49.5 V23.5 Z" fill="#000" stroke="#ee10ee" stroke-width="1"/>
<path d="M591.5 18.5 H616.5 L621.5 23.5 V49.5 L616.5 54.5 H591.5 L586.5 49.5 V23.5 Z" fill="#000" stroke="#ee10ee" stroke-width="1"/>
<path d="M33.5 17.8 V54.3" stroke="#fff" stroke-width="1"/>
<path d="M137.5 17.8 V54.3" stroke="#fff" stroke-width="1"/>
<path d="M206.5 17.8 V54.3" stroke="#fff" stroke-width="1"/>
<path d="M310.5 17.8 V54.3" stroke="#fff" stroke-width="1"/>
<path d="M344.5 17.8 V54.3" stroke="#fff" stroke-width="1"/>
<path d="M413.5 17.8 V54.3" stroke="#fff" stroke-width="1"/>
<path d="M-1 29.2 H18 L24.5 36.2 L18 43 H-1 Z" fill="#fff"/>
<text transform="translate(28.5 40.3) scale(0.9 1)" font-family='"Liberation Sans",sans-serif' font-size="15.5" text-anchor="middle" fill="#ee10ee">C</text>
<path d="M-1 29.2 H18 L24.5 36.2 L18 43 H-1 Z" fill="#fff"/>
<text transform="translate(85 40.3) scale(0.9 1)" font-family='"Liberation Sans",sans-serif' font-size="15.5" text-anchor="middle" fill="#fff">0x4</text>
<text transform="translate(119.5 40.3) scale(0.9 1)" font-family='"Liberation Sans",sans-serif' font-size="15.5" text-anchor="middle" fill="#fff">0xE</text>
<text transform="translate(188.5 40.3) scale(0.9 1)" font-family='"Liberation Sans",sans-serif' font-size="15.5" text-anchor="middle" fill="#ee10ee">0x02</text>
<text transform="translate(396 40.3) scale(0.9 1)" font-family='"Liberation Sans",sans-serif' font-size="15.5" text-anchor="middle" fill="#fff">0xE</text>
<text transform="translate(465 40.3) scale(0.9 1)" font-family='"Liberation Sans",sans-serif' font-size="15.5" text-anchor="middle" fill="#ee10ee">0x01</text>
<text transform="translate(500 40.3) scale(0.9 1)" font-family='"Liberation Sans",sans-serif' font-size="15.5" text-anchor="middle" fill="#fff">0x22</text>
<text transform="translate(551.5 40.3) scale(0.9 1)" font-family='"Liberation Sans",sans-serif' font-size="15.5" text-anchor="middle" fill="#ee10ee">Sync</text>
<text transform="translate(605 40.3) scale(0.9 1)" font-family='"Liberation Sans",sans-serif' font-size="15.5" text-anchor="middle" fill="#ee10ee">0x00</text>
</svg>
<div class="t" style="left:2px;top:29px;font-size:14px;color:#000;transform:scaleX(.9)">B1</div>
<div class="tc" style="left:12px;width:100px;top:267px;font-size:17px;transform:scaleX(.89)">−625µs</div>
<div class="tc" style="left:136px;width:100px;top:267px;font-size:17px;transform:scaleX(.89)">−312.5µs</div>
<div class="tc" style="left:260px;width:100px;top:267px;font-size:17px;transform:scaleX(.89)">0s</div>
<div class="tc" style="left:384px;width:100px;top:267px;font-size:17px;transform:scaleX(.89)">312.5µs</div>
<div class="tc" style="left:508px;width:100px;top:267px;font-size:17px;transform:scaleX(.89)">625µs</div>
<div class="tr" style="right:1px;top:25.5px;font-size:16.5px;color:#ffff00;transform:scaleX(.9)">4.29V</div>
<div class="tr" style="right:1px;top:60.5px;font-size:16.5px;color:#ffff00;transform:scaleX(.9)">3.3V</div>
<div class="tr" style="right:1px;top:95.5px;font-size:16.5px;color:#ffff00;transform:scaleX(.9)">2.31V</div>
<div class="tr" style="right:1px;top:130.5px;font-size:16.5px;color:#ffff00;transform:scaleX(.9)">1.32V</div>
<div class="tr" style="right:1px;top:165.5px;font-size:16.5px;color:#ffff00;transform:scaleX(.9)">330mV</div>
<div class="tr" style="right:1px;top:200.5px;font-size:16.5px;color:#ffff00;transform:scaleX(.9)">−660mV</div>
<div class="tr" style="right:1px;top:235.5px;font-size:16.5px;color:#ffff00;transform:scaleX(.9)">−1.65V</div>
</div>
<div class="a" style="left:641px;top:55px;width:626px;height:636px;background:#3399ff"></div>
<div class="a" style="left:643px;top:57px;width:622px;height:632px;background:#23252d"></div>
<div class="a" style="left:643px;top:57px;width:622px;height:33px;background:#323642"></div>
<div class="t" style="left:650px;top:64px;font-size:16.5px;transform:scaleX(.985)">Bus1 SENT(228)</div>
<svg style="left:1190px;top:57px" width="76" height="32"><circle cx="16" cy="15" r="13.3" fill="none" stroke="#fff" stroke-width="1.2"/><circle cx="60" cy="15" r="13.2" fill="#3a3a3a" stroke="#0a0a0a" stroke-width="1.2"/><path d="M53 8 L67 22 M67 8 L53 22" stroke="#fff" stroke-width="1.2"/><text x="16" y="23.500" text-anchor="middle" font-family='"Liberation Sans",sans-serif' font-size="24" fill="#fff">?</text></svg>
<div class="a" style="left:644px;top:98px;width:140px;height:36px;background:#1e1f25;border:1px solid #474a54"></div>
<div class="a" style="left:784px;top:98px;width:444px;height:36px;background:#1e1f25;border:1px solid #474a54"></div>
<div class="a" style="left:1228px;top:98px;width:36px;height:36px;background:#373943;border:1px solid #474a54"></div>
<div class="t" style="left:694px;top:108px;font-size:17px;transform:scaleX(.97)">Index</div>
<svg style="left:758px;top:110px" width="16" height="12"><path d="M2.7 2.5 H14 L8.350 10.500 Z" fill="#808080"/></svg>
<svg style="left:1228px;top:98px" width="36" height="36"><circle cx="17" cy="17" r="9.8" fill="none" stroke="#fff" stroke-width="1.7"/><path d="M23.5 24 L27.5 28.5" stroke="#fff" stroke-width="1.8"/><path d="M19 27.2 A10 10 0 0 0 23 25.5" stroke="#373943" stroke-width="3" fill="none"/></svg>
<div class="a" style="left:644px;top:142px;width:581px;height:544px;background:#fff"></div>
<div class="cell" style="left:645px;top:143px;width:56px;height:32px;line-height:30.5px;background:#3c404b"><span style="display:inline-block;transform:scaleX(0.92)">Index</span></div>
<div class="cell" style="left:703px;top:143px;width:85px;height:32px;line-height:30.5px;background:#3c404b"><span style="display:inline-block;transform:scaleX(0.92)">Time</span></div>
<div class="cell" style="left:790px;top:143px;width:85px;height:32px;line-height:30.5px;background:#3c404b"><span style="display:inline-block;transform:scaleX(0.88)">S&amp;C</span></div>
<div class="cell" style="left:877px;top:143px;width:85px;height:32px;line-height:30.5px;background:#3c404b"><span style="display:inline-block;transform:scaleX(0.88)">ID</span></div>
<div class="cell" style="left:964px;top:143px;width:85px;height:32px;line-height:30.5px;background:#3c404b"><span style="display:inline-block;transform:scaleX(0.92)">Data</span></div>
<div class="cell" style="left:1051px;top:143px;width:85px;height:32px;line-height:30.5px;background:#3c404b"><span style="display:inline-block;transform:scaleX(0.86)">CRC</span></div>
<div class="cell" style="left:1138px;top:143px;width:85px;height:32px;line-height:30.5px;background:#3c404b"><span style="display:inline-block;transform:scaleX(0.86)">EEROR</span></div>
<div class="cell" style="left:645px;top:176px;width:56px;background:#3399ff"><span style="display:inline-block;transform:scaleX(.9)">1</span></div>
<div class="cell" style="left:703px;top:176px;width:85px;background:#3399ff"><span style="display:inline-block;transform:scaleX(.9)">−79.51ms</span></div>
<div class="cell" style="left:790px;top:176px;width:85px;background:#3399ff"><span style="display:inline-block;transform:scaleX(.9)">0x19</span></div>
<div class="cell" style="left:877px;top:176px;width:85px;background:#3399ff"></div>
<div class="cell" style="left:964px;top:176px;width:85px;background:#3399ff"><span style="display:inline-block;transform:scaleX(.92);letter-spacing:3.2px;margin-left:1px">643D4A</span></div>
<div class="cell" style="left:1051px;top:176px;width:85px;background:#3399ff"></div>
<div class="cell" style="left:1138px;top:176px;width:85px;background:#3399ff"></div>
<div class="cell" style="left:645px;top:210px;width:56px;background:#272a35"><span style="display:inline-block;transform:scaleX(.9)">2</span></div>
<div class="cell" style="left:703px;top:210px;width:85px;background:#272a35"><span style="display:inline-block;transform:scaleX(.9)">−78.83ms</span></div>
<div class="cell" style="left:790px;top:210px;width:85px;background:#272a35"><span style="display:inline-block;transform:scaleX(.9)">0x16</span></div>
<div class="cell" style="left:877px;top:210px;width:85px;background:#272a35"></div>
<div class="cell" style="left:964px;top:210px;width:85px;background:#272a35"><span style="display:inline-block;transform:scaleX(.92);letter-spacing:3.2px;margin-left:1px">544E49</span></div>
<div class="cell" style="left:1051px;top:210px;width:85px;background:#272a35"></div>
<div class="cell" style="left:1138px;top:210px;width:85px;background:#272a35"></div>
<div class="cell" style="left:645px;top:244px;width:56px;background:#3c404b"><span style="display:inline-block;transform:scaleX(.9)">3</span></div>
<div class="cell" style="left:703px;top:244px;width:85px;background:#3c404b"><span style="display:inline-block;transform:scaleX(.9)">−78.14ms</span></div>
<div class="cell" style="left:790px;top:244px;width:85px;background:#3c404b"><span style="display:inline-block;transform:scaleX(.9)">0x1A</span></div>
<div class="cell" style="left:877px;top:244px;width:85px;background:#3c404b"></div>
<div class="cell" style="left:964px;top:244px;width:85px;background:#3c404b"><span style="display:inline-block;transform:scaleX(.92);letter-spacing:3.2px;margin-left:1px">453E48</span></div>
<div class="cell" style="left:1051px;top:244px;width:85px;background:#3c404b"></div>
<div class="cell" style="left:1138px;top:244px;width:85px;background:#3c404b"></div>
<div class="cell" style="left:645px;top:278px;width:56px;background:#272a35"><span style="display:inline-block;transform:scaleX(.9)">4</span></div>
<div class="cell" style="left:703px;top:278px;width:85px;background:#272a35"><span style="display:inline-block;transform:scaleX(.9)">−77.45ms</span></div>
<div class="cell" style="left:790px;top:278px;width:85px;background:#272a35"><span style="display:inline-block;transform:scaleX(.9)">0x16</span></div>
<div class="cell" style="left:877px;top:278px;width:85px;background:#272a35"></div>
<div class="cell" style="left:964px;top:278px;width:85px;background:#272a35"><span style="display:inline-block;transform:scaleX(.92);letter-spacing:3.2px;margin-left:1px">453E48</span></div>
<div class="cell" style="left:1051px;top:278px;width:85px;background:#272a35"></div>
<div class="cell" style="left:1138px;top:278px;width:85px;background:#272a35"></div>
<div class="cell" style="left:645px;top:312px;width:56px;background:#3c404b"><span style="display:inline-block;transform:scaleX(.9)">5</span></div>
<div class="cell" style="left:703px;top:312px;width:85px;background:#3c404b"><span style="display:inline-block;transform:scaleX(.9)">−76.77ms</span></div>
<div class="cell" style="left:790px;top:312px;width:85px;background:#3c404b"><span style="display:inline-block;transform:scaleX(.9)">0x22</span></div>
<div class="cell" style="left:877px;top:312px;width:85px;background:#3c404b"></div>
<div class="cell" style="left:964px;top:312px;width:85px;background:#3c404b"><span style="display:inline-block;transform:scaleX(.92);letter-spacing:3.2px;margin-left:1px">443E48</span></div>
<div class="cell" style="left:1051px;top:312px;width:85px;background:#3c404b"></div>
<div class="cell" style="left:1138px;top:312px;width:85px;background:#3c404b"></div>
<div class="cell" style="left:645px;top:346px;width:56px;background:#272a35"><span style="display:inline-block;transform:scaleX(.9)">6</span></div>
<div class="cell" style="left:703px;top:346px;width:85px;background:#272a35"><span style="display:inline-block;transform:scaleX(.9)">−76.09ms</span></div>
<div class="cell" style="left:790px;top:346px;width:85px;background:#272a35"><span style="display:inline-block;transform:scaleX(.9)">0x1E</span></div>
<div class="cell" style="left:877px;top:346px;width:85px;background:#272a35"></div>
<div class="cell" style="left:964px;top:346px;width:85px;background:#272a35"><span style="display:inline-block;transform:scaleX(.92);letter-spacing:3.2px;margin-left:1px">444E48</span></div>
<div class="cell" style="left:1051px;top:346px;width:85px;background:#272a35"></div>
<div class="cell" style="left:1138px;top:346px;width:85px;background:#272a35"></div>
<div class="cell" style="left:645px;top:380px;width:56px;background:#3c404b"><span style="display:inline-block;transform:scaleX(.9)">7</span></div>
<div class="cell" style="left:703px;top:380px;width:85px;background:#3c404b"><span style="display:inline-block;transform:scaleX(.9)">−75.4ms</span></div>
<div class="cell" style="left:790px;top:380px;width:85px;background:#3c404b"><span style="display:inline-block;transform:scaleX(.9)">0x19</span></div>
<div class="cell" style="left:877px;top:380px;width:85px;background:#3c404b"></div>
<div class="cell" style="left:964px;top:380px;width:85px;background:#3c404b"><span style="display:inline-block;transform:scaleX(.92);letter-spacing:3.2px;margin-left:1px">544E49</span></div>
<div class="cell" style="left:1051px;top:380px;width:85px;background:#3c404b"></div>
<div class="cell" style="left:1138px;top:380px;width:85px;background:#3c404b"></div>
<div class="cell" style="left:645px;top:414px;width:56px;background:#272a35"><span style="display:inline-block;transform:scaleX(.9)">8</span></div>
<div class="cell" style="left:703px;top:414px;width:85px;background:#272a35"><span style="display:inline-block;transform:scaleX(.9)">−74.72ms</span></div>
<div class="cell" style="left:790px;top:414px;width:85px;background:#272a35"><span style="display:inline-block;transform:scaleX(.9)">0x1D</span></div>
<div class="cell" style="left:877px;top:414px;width:85px;background:#272a35"></div>
<div class="cell" style="left:964px;top:414px;width:85px;background:#272a35"><span style="display:inline-block;transform:scaleX(.92);letter-spacing:3.2px;margin-left:1px">554E49</span></div>
<div class="cell" style="left:1051px;top:414px;width:85px;background:#272a35"></div>
<div class="cell" style="left:1138px;top:414px;width:85px;background:#272a35"></div>
<div class="cell" style="left:645px;top:448px;width:56px;background:#3c404b"><span style="display:inline-block;transform:scaleX(.9)">9</span></div>
<div class="cell" style="left:703px;top:448px;width:85px;background:#3c404b"><span style="display:inline-block;transform:scaleX(.9)">−74.04ms</span></div>
<div class="cell" style="left:790px;top:448px;width:85px;background:#3c404b"><span style="display:inline-block;transform:scaleX(.9)">0x21</span></div>
<div class="cell" style="left:877px;top:448px;width:85px;background:#3c404b"></div>
<div class="cell" style="left:964px;top:448px;width:85px;background:#3c404b"><span style="display:inline-block;transform:scaleX(.92);letter-spacing:3.2px;margin-left:1px">554E49</span></div>
<div class="cell" style="left:1051px;top:448px;width:85px;background:#3c404b"></div>
<div class="cell" style="left:1138px;top:448px;width:85px;background:#3c404b"></div>
<div class="cell" style="left:645px;top:482px;width:56px;background:#272a35"><span style="display:inline-block;transform:scaleX(.9)">10</span></div>
<div class="cell" style="left:703px;top:482px;width:85px;background:#272a35"><span style="display:inline-block;transform:scaleX(.9)">−73.35ms</span></div>
<div class="cell" style="left:790px;top:482px;width:85px;background:#272a35"><span style="display:inline-block;transform:scaleX(.9)">0x15</span></div>
<div class="cell" style="left:877px;top:482px;width:85px;background:#272a35"></div>
<div class="cell" style="left:964px;top:482px;width:85px;background:#272a35"><span style="display:inline-block;transform:scaleX(.92);letter-spacing:3.2px;margin-left:1px">554E49</span></div>
<div class="cell" style="left:1051px;top:482px;width:85px;background:#272a35"></div>
<div class="cell" style="left:1138px;top:482px;width:85px;background:#272a35"></div>
<div class="cell" style="left:645px;top:516px;width:56px;background:#3c404b"><span style="display:inline-block;transform:scaleX(.9)">11</span></div>
<div class="cell" style="left:703px;top:516px;width:85px;background:#3c404b"><span style="display:inline-block;transform:scaleX(.9)">−72.67ms</span></div>
<div class="cell" style="left:790px;top:516px;width:85px;background:#3c404b"><span style="display:inline-block;transform:scaleX(.9)">0x22</span></div>
<div class="cell" style="left:877px;top:516px;width:85px;background:#3c404b"></div>
<div class="cell" style="left:964px;top:516px;width:85px;background:#3c404b"><span style="display:inline-block;transform:scaleX(.92);letter-spacing:3.2px;margin-left:1px">554E49</span></div>
<div class="cell" style="left:1051px;top:516px;width:85px;background:#3c404b"></div>
<div class="cell" style="left:1138px;top:516px;width:85px;background:#3c404b"></div>
<div class="cell" style="left:645px;top:550px;width:56px;background:#272a35"><span style="display:inline-block;transform:scaleX(.9)">12</span></div>
<div class="cell" style="left:703px;top:550px;width:85px;background:#272a35"><span style="display:inline-block;transform:scaleX(.9)">−71.98ms</span></div>
<div class="cell" style="left:790px;top:550px;width:85px;background:#272a35"><span style="display:inline-block;transform:scaleX(.9)">0x22</span></div>
<div class="cell" style="left:877px;top:550px;width:85px;background:#272a35"></div>
<div class="cell" style="left:964px;top:550px;width:85px;background:#272a35"><span style="display:inline-block;transform:scaleX(.92);letter-spacing:3.2px;margin-left:1px">454E48</span></div>
<div class="cell" style="left:1051px;top:550px;width:85px;background:#272a35"></div>
<div class="cell" style="left:1138px;top:550px;width:85px;background:#272a35"></div>
<div class="cell" style="left:645px;top:584px;width:56px;background:#3c404b"><span style="display:inline-block;transform:scaleX(.9)">13</span></div>
<div class="cell" style="left:703px;top:584px;width:85px;background:#3c404b"><span style="display:inline-block;transform:scaleX(.9)">−71.3ms</span></div>
<div class="cell" style="left:790px;top:584px;width:85px;background:#3c404b"><span style="display:inline-block;transform:scaleX(.9)">0x15</span></div>
<div class="cell" style="left:877px;top:584px;width:85px;background:#3c404b"></div>
<div class="cell" style="left:964px;top:584px;width:85px;background:#3c404b"><span style="display:inline-block;transform:scaleX(.92);letter-spacing:3.2px;margin-left:1px">454E48</span></div>
<div class="cell" style="left:1051px;top:584px;width:85px;background:#3c404b"></div>
<div class="cell" style="left:1138px;top:584px;width:85px;background:#3c404b"></div>
<div class="cell" style="left:645px;top:618px;width:56px;background:#272a35"><span style="display:inline-block;transform:scaleX(.9)">14</span></div>
<div class="cell" style="left:703px;top:618px;width:85px;background:#272a35"><span style="display:inline-block;transform:scaleX(.9)">−70.61ms</span></div>
<div class="cell" style="left:790px;top:618px;width:85px;background:#272a35"><span style="display:inline-block;transform:scaleX(.9)">0x1D</span></div>
<div class="cell" style="left:877px;top:618px;width:85px;background:#272a35"></div>
<div class="cell" style="left:964px;top:618px;width:85px;background:#272a35"><span style="display:inline-block;transform:scaleX(.92);letter-spacing:3.2px;margin-left:1px">453D38</span></div>
<div class="cell" style="left:1051px;top:618px;width:85px;background:#272a35"></div>
<div class="cell" style="left:1138px;top:618px;width:85px;background:#272a35"></div>
<div class="cell" style="left:645px;top:652px;width:56px;background:#3c404b"><span style="display:inline-block;transform:scaleX(.9)">15</span></div>
<div class="cell" style="left:703px;top:652px;width:85px;background:#3c404b"><span style="display:inline-block;transform:scaleX(.9)">−69.93ms</span></div>
<div class="cell" style="left:790px;top:652px;width:85px;background:#3c404b"><span style="display:inline-block;transform:scaleX(.9)">0x15</span></div>
<div class="cell" style="left:877px;top:652px;width:85px;background:#3c404b"></div>
<div class="cell" style="left:964px;top:652px;width:85px;background:#3c404b"><span style="display:inline-block;transform:scaleX(.92);letter-spacing:3.2px;margin-left:1px">453D38</span></div>
<div class="cell" style="left:1051px;top:652px;width:85px;background:#3c404b"></div>
<div class="cell" style="left:1138px;top:652px;width:85px;background:#3c404b"></div>
<div class="a" style="left:1224px;top:142px;width:37px;height:544px;background:#32353f;border-right:1px solid #3f424c"></div>
<div class="a" style="left:1224px;top:142px;width:37px;height:35px;background:#37383f"></div>
<div class="a" style="left:1224px;top:177px;width:36px;height:32px;background:#3399ff"></div>
<div class="a" style="left:1224px;top:651px;width:37px;height:35px;background:#37383f"></div>
<svg style="left:1224px;top:142px" width="37" height="35"><path d="M10 23 L18.5 14 L27 23" fill="none" stroke="#fff" stroke-width="2.4"/></svg>
<svg style="left:1224px;top:651px" width="37" height="35"><path d="M10 12 L18.5 21 L27 12" fill="none" stroke="#fff" stroke-width="2.4"/></svg>
<div class="a" style="left:6px;top:709px;width:1269px;height:88px;background:#202126;border:1px solid #3a3d48;border-bottom-color:#474a56;border-top-color:#282a31"></div>
<div class="a" style="left:9px;top:711px;width:55px;height:82px;background:linear-gradient(#51565f,#323741)"></div>
<svg style="left:9px;top:711px" width="55" height="82"><circle cx="26.5" cy="40.5" r="10.3" fill="none" stroke="#fff" stroke-width="1.1"/><path d="M29 35.5 L24 40.5 L29 45.5" fill="none" stroke="#fff" stroke-width="2"/></svg>
<div class="a" style="left:68px;top:711px;width:120.3px;height:82.3px;background:#ffff00"></div>
<div class="a" style="left:69px;top:718px;width:117.8px;height:69.7px;background:#3c3b35;border:1px solid #2a2a22"></div>
<div class="t" style="left:76px;top:720px;font-size:15.5px;transform:scaleX(.95)">C1</div>
<div class="tr" style="right:1096px;top:720px;font-size:15px;transform:scaleX(.9)">1.00V</div>
<div class="t" style="left:73px;top:739px;font-size:13px;transform:scaleX(.88)">1MΩ</div>
<div class="tr" style="right:1096px;top:739px;font-size:13px;transform:scaleX(.9)">FULL</div>
<div class="tr" style="right:1096px;top:757px;font-size:13px;transform:scaleX(.9)">1X</div>
<div class="tr" style="right:1096px;top:775px;font-size:13px;transform:scaleX(.9)">0.00V</div>
<svg style="left:72px;top:755px" width="24" height="32"><g fill="#9c9cba" stroke="#9c9cba" stroke-width="1.7"><path d="M2 6.3 H19.5" fill="none"/><path d="M1 6.8 L7.5 2 V6.8 Z" stroke="none"/><path d="M1 10.6 H18.5" fill="none"/><path d="M20 10.2 L13.5 15 V10.2 Z" stroke="none"/></g><rect x="1" y="22" width="19" height="3" fill="#3399ff"/><path d="M1 28.5 H20" stroke="#3399ff" stroke-width="3" stroke-dasharray="2.8 1.2"/></svg>
<div class="a" style="left:192px;top:711px;width:76px;height:82px;background:#323642;border:1px solid #555866;border-top:7px solid #666a78"></div>
<div class="t" style="left:200px;top:720px;font-size:15.5px;transform:scaleX(.95)">C2</div>
<div class="tc" style="left:192px;width:76px;top:744px;font-size:18.5px;font-weight:bold;transform:scaleX(.93)">OFF</div>
<div class="a" style="left:272px;top:711px;width:76px;height:82px;background:#323642;border:1px solid #555866;border-top:7px solid #666a78"></div>
<div class="t" style="left:280px;top:720px;font-size:15.5px;transform:scaleX(.95)">C3</div>
<div class="tc" style="left:272px;width:76px;top:744px;font-size:18.5px;font-weight:bold;transform:scaleX(.93)">OFF</div>
<div class="a" style="left:352px;top:711px;width:76px;height:82px;background:#323642;border:1px solid #555866;border-top:7px solid #666a78"></div>
<div class="t" style="left:360px;top:720px;font-size:15.5px;transform:scaleX(.95)">C4</div>
<div class="tc" style="left:352px;width:76px;top:744px;font-size:18.5px;font-weight:bold;transform:scaleX(.93)">OFF</div>
<div class="a" style="left:432px;top:711px;width:120px;height:82px;background:#323642;border:1px solid #555866;border-top:7px solid #666a78"></div>
<div class="t" style="left:440px;top:718px;font-size:15px;transform:scaleX(1.03)">Digital</div>
<div class="t" style="left:526px;top:740px;font-size:12.5px">0</div>
<div class="t" style="left:441px;top:775.5px;font-size:12.5px;transform:scaleX(.88)">15</div>
<svg style="left:470px;top:739px" width="44" height="44"><g fill="#6b6e7c"><rect x="0" y="0" width="8" height="8"/><rect x="0" y="12" width="8" height="8"/><rect x="0" y="24" width="8" height="8"/><rect x="0" y="36" width="8" height="8"/><rect x="12" y="0" width="8" height="8"/><rect x="12" y="12" width="8" height="8"/><rect x="12" y="24" width="8" height="8"/><rect x="12" y="36" width="8" height="8"/><rect x="24" y="0" width="8" height="8"/><rect x="24" y="12" width="8" height="8"/><rect x="24" y="24" width="8" height="8"/><rect x="24" y="36" width="8" height="8"/><rect x="36" y="0" width="8" height="8"/><rect x="36" y="12" width="8" height="8"/><rect x="36" y="24" width="8" height="8"/><rect x="36" y="36" width="8" height="8"/></g></svg>
<div class="a" style="left:1114px;top:711px;width:55px;height:82px;background:linear-gradient(#51565f,#323741)"></div>
<svg style="left:1114px;top:711px" width="55" height="82"><circle cx="28.5" cy="40.5" r="10.3" fill="none" stroke="#fff" stroke-width="1.1"/><path d="M26.5 35.5 L31.5 40.5 L26.5 45.5" fill="none" stroke="#fff" stroke-width="2"/></svg>
<div class="a" style="left:1173px;top:711px;width:97px;height:82px;background:#323642"></div>
<svg style="left:1173px;top:711px" width="97" height="82"><g fill="none" stroke="#fff" stroke-width="1.3"><rect x="12.5" y="17.5" width="17.3" height="17"/><rect x="15.5" y="8.500" width="11.300" height="9"/></g><rect x="18.1" y="11.9" width="2.4" height="2.6" fill="#fff"/><rect x="22.6" y="11.9" width="2.4" height="2.6" fill="#fff"/><g fill="none" stroke="#fff" stroke-width="1.1"><circle cx="76.500" cy="26.500" r="12"/><ellipse cx="76.500" cy="26.500" rx="5.500" ry="12"/><path d="M64.500 26.500 H88.500 M66.500 20 H86.500 M66.500 33 H86.500"/><circle cx="83.500" cy="32" r="6.500" fill="#323642"/><path d="M79.500 36.500 L87.500 27.500"/></g></svg>
<div class="tc" style="left:1173px;width:97px;top:755px;font-size:16.5px;transform:scaleX(.93)">10:28</div>
<div class="tc" style="left:1173px;width:97px;top:775px;font-size:16.5px;transform:scaleX(1.0)">2024/09/18</div>
</div></body></html>
